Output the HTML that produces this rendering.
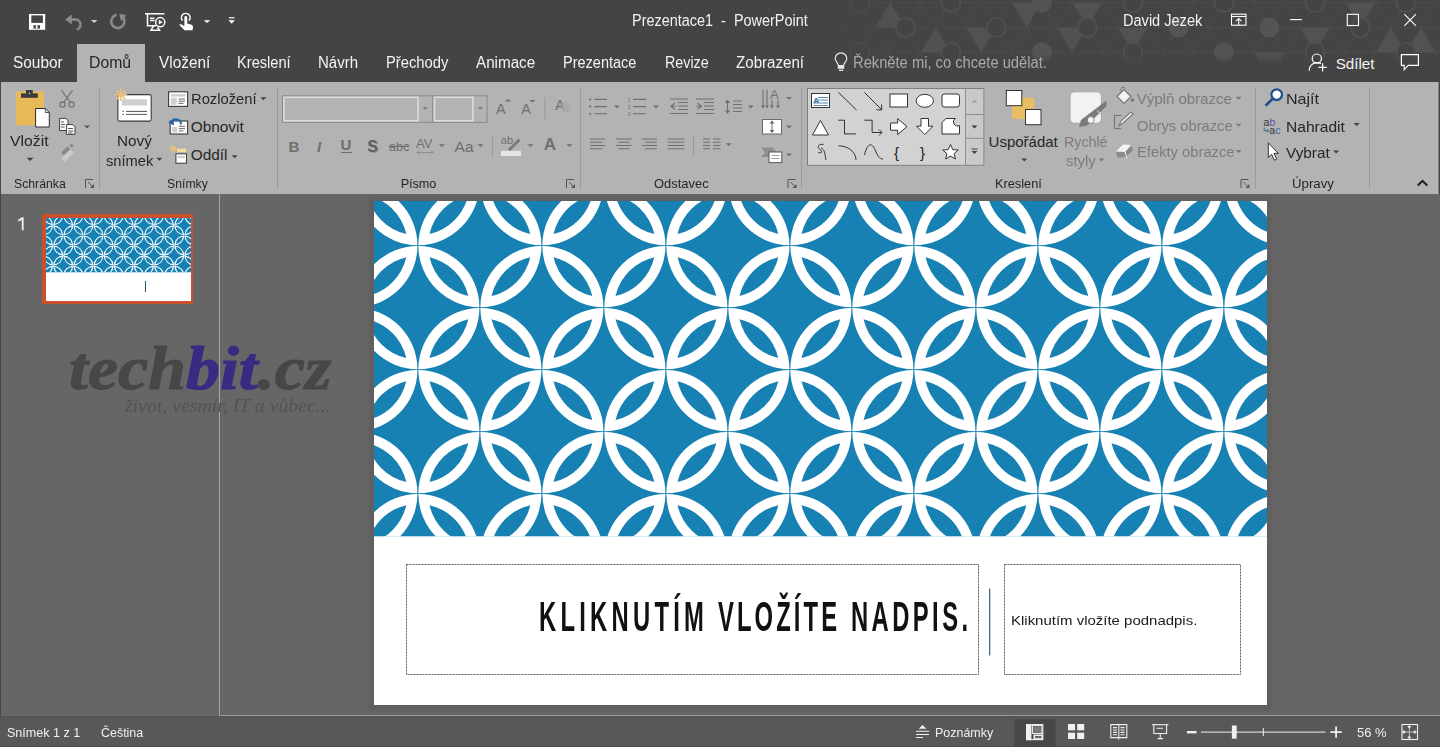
<!DOCTYPE html>
<html><head><meta charset="utf-8">
<style>
*{margin:0;padding:0;box-sizing:border-box}
html,body{width:1440px;height:747px;overflow:hidden;background:#666666;font-family:"Liberation Sans",sans-serif}
.a{position:absolute}
.t{position:absolute;line-height:normal;white-space:nowrap}
svg{overflow:visible}
</style></head><body>
<div class="a" style="left:0;top:0;width:1440px;height:82px;background:#444444"></div>
<svg width="1440" height="82" style="position:absolute;left:0;top:0"><defs><linearGradient id="hgx" x1="0" y1="0" x2="1" y2="0" gradientUnits="objectBoundingBox"><stop offset="0" stop-color="#fff" stop-opacity="0"/><stop offset="0.12" stop-color="#fff" stop-opacity="1"/><stop offset="1" stop-color="#fff" stop-opacity="1"/></linearGradient><linearGradient id="hgy" x1="0" y1="0" x2="0" y2="1"><stop offset="0" stop-color="#fff"/><stop offset="0.66" stop-color="#fff"/><stop offset="0.8" stop-color="#000"/></linearGradient><mask id="hm" maskUnits="userSpaceOnUse" x="820" y="0" width="620" height="82"><rect x="820" y="0" width="620" height="82" fill="url(#hgx)"/></mask><mask id="hm2" maskUnits="userSpaceOnUse" x="0" y="0" width="1440" height="82"><rect x="0" y="0" width="1440" height="82" fill="url(#hgy)"/></mask></defs><g mask="url(#hm2)"><g mask="url(#hm)"><path d="M905.4 27.5L875.1 27.5L890.2 2.5ZM950.9 52.5L920.6 52.5L935.7 27.5ZM996.4 27.5L981.2 52.5L966.1 27.5ZM1041.9 2.5L1026.7 27.5L1011.6 2.5ZM1087.4 27.5L1072.2 52.5L1057.1 27.5ZM1087.4 27.5L1072.2 2.5L1102.6 2.5ZM1132.9 52.5L1117.7 27.5L1148.1 27.5ZM1269.4 77.5L1254.2 52.5L1284.6 52.5ZM1314.9 52.5L1299.7 27.5L1330.1 27.5ZM1360.4 27.5L1345.2 2.5L1375.6 2.5ZM1405.9 52.5L1375.6 52.5L1390.7 27.5ZM1405.9 52.5L1421.1 27.5L1436.2 52.5Z" fill="#525252"/><path d="M799.2 2.5 L784.1 27.5 L753.7 27.5 L738.6 2.5 L753.7 -22.5 L784.1 -22.5ZM768.9 2.5L799.2 2.5M768.9 2.5L784.1 27.5M768.9 2.5L753.7 27.5M768.9 2.5L738.6 2.5M768.9 2.5L753.7 -22.5M768.9 2.5L784.1 -22.5M799.2 52.5 L784.1 77.5 L753.7 77.5 L738.6 52.5 L753.7 27.5 L784.1 27.5ZM768.9 52.5L799.2 52.5M768.9 52.5L784.1 77.5M768.9 52.5L753.7 77.5M768.9 52.5L738.6 52.5M768.9 52.5L753.7 27.5M768.9 52.5L784.1 27.5M844.7 -22.5 L829.6 2.5 L799.2 2.5 L784.1 -22.5 L799.2 -47.5 L829.6 -47.5ZM814.4 -22.5L844.7 -22.5M814.4 -22.5L829.6 2.5M814.4 -22.5L799.2 2.5M814.4 -22.5L784.1 -22.5M814.4 -22.5L799.2 -47.5M814.4 -22.5L829.6 -47.5M844.7 27.5 L829.6 52.5 L799.2 52.5 L784.1 27.5 L799.2 2.5 L829.6 2.5ZM814.4 27.5L844.7 27.5M814.4 27.5L829.6 52.5M814.4 27.5L799.2 52.5M814.4 27.5L784.1 27.5M814.4 27.5L799.2 2.5M814.4 27.5L829.6 2.5M844.7 77.5 L829.6 102.5 L799.2 102.5 L784.1 77.5 L799.2 52.5 L829.6 52.5ZM814.4 77.5L844.7 77.5M814.4 77.5L829.6 102.5M814.4 77.5L799.2 102.5M814.4 77.5L784.1 77.5M814.4 77.5L799.2 52.5M814.4 77.5L829.6 52.5M890.2 2.5 L875.1 27.5 L844.7 27.5 L829.6 2.5 L844.7 -22.5 L875.1 -22.5ZM859.9 2.5L890.2 2.5M859.9 2.5L875.1 27.5M859.9 2.5L844.7 27.5M859.9 2.5L829.6 2.5M859.9 2.5L844.7 -22.5M859.9 2.5L875.1 -22.5M890.2 52.5 L875.1 77.5 L844.7 77.5 L829.6 52.5 L844.7 27.5 L875.1 27.5ZM859.9 52.5L890.2 52.5M859.9 52.5L875.1 77.5M859.9 52.5L844.7 77.5M859.9 52.5L829.6 52.5M859.9 52.5L844.7 27.5M859.9 52.5L875.1 27.5M935.7 -22.5 L920.6 2.5 L890.2 2.5 L875.1 -22.5 L890.2 -47.5 L920.6 -47.5ZM905.4 -22.5L935.7 -22.5M905.4 -22.5L920.6 2.5M905.4 -22.5L890.2 2.5M905.4 -22.5L875.1 -22.5M905.4 -22.5L890.2 -47.5M905.4 -22.5L920.6 -47.5M935.7 27.5 L920.6 52.5 L890.2 52.5 L875.1 27.5 L890.2 2.5 L920.6 2.5ZM905.4 27.5L935.7 27.5M905.4 27.5L920.6 52.5M905.4 27.5L890.2 52.5M905.4 27.5L875.1 27.5M905.4 27.5L890.2 2.5M905.4 27.5L920.6 2.5M935.7 77.5 L920.6 102.5 L890.2 102.5 L875.1 77.5 L890.2 52.5 L920.6 52.5ZM905.4 77.5L935.7 77.5M905.4 77.5L920.6 102.5M905.4 77.5L890.2 102.5M905.4 77.5L875.1 77.5M905.4 77.5L890.2 52.5M905.4 77.5L920.6 52.5M981.2 2.5 L966.1 27.5 L935.7 27.5 L920.6 2.5 L935.7 -22.5 L966.1 -22.5ZM950.9 2.5L981.2 2.5M950.9 2.5L966.1 27.5M950.9 2.5L935.7 27.5M950.9 2.5L920.6 2.5M950.9 2.5L935.7 -22.5M950.9 2.5L966.1 -22.5M981.2 52.5 L966.1 77.5 L935.7 77.5 L920.6 52.5 L935.7 27.5 L966.1 27.5ZM950.9 52.5L981.2 52.5M950.9 52.5L966.1 77.5M950.9 52.5L935.7 77.5M950.9 52.5L920.6 52.5M950.9 52.5L935.7 27.5M950.9 52.5L966.1 27.5M1026.7 -22.5 L1011.6 2.5 L981.2 2.5 L966.1 -22.5 L981.2 -47.5 L1011.6 -47.5ZM996.4 -22.5L1026.7 -22.5M996.4 -22.5L1011.6 2.5M996.4 -22.5L981.2 2.5M996.4 -22.5L966.1 -22.5M996.4 -22.5L981.2 -47.5M996.4 -22.5L1011.6 -47.5M1026.7 27.5 L1011.6 52.5 L981.2 52.5 L966.1 27.5 L981.2 2.5 L1011.6 2.5ZM996.4 27.5L1026.7 27.5M996.4 27.5L1011.6 52.5M996.4 27.5L981.2 52.5M996.4 27.5L966.1 27.5M996.4 27.5L981.2 2.5M996.4 27.5L1011.6 2.5M1026.7 77.5 L1011.6 102.5 L981.2 102.5 L966.1 77.5 L981.2 52.5 L1011.6 52.5ZM996.4 77.5L1026.7 77.5M996.4 77.5L1011.6 102.5M996.4 77.5L981.2 102.5M996.4 77.5L966.1 77.5M996.4 77.5L981.2 52.5M996.4 77.5L1011.6 52.5M1072.2 2.5 L1057.1 27.5 L1026.7 27.5 L1011.6 2.5 L1026.7 -22.5 L1057.1 -22.5ZM1041.9 2.5L1072.2 2.5M1041.9 2.5L1057.1 27.5M1041.9 2.5L1026.7 27.5M1041.9 2.5L1011.6 2.5M1041.9 2.5L1026.7 -22.5M1041.9 2.5L1057.1 -22.5M1072.2 52.5 L1057.1 77.5 L1026.7 77.5 L1011.6 52.5 L1026.7 27.5 L1057.1 27.5ZM1041.9 52.5L1072.2 52.5M1041.9 52.5L1057.1 77.5M1041.9 52.5L1026.7 77.5M1041.9 52.5L1011.6 52.5M1041.9 52.5L1026.7 27.5M1041.9 52.5L1057.1 27.5M1117.7 -22.5 L1102.6 2.5 L1072.2 2.5 L1057.1 -22.5 L1072.2 -47.5 L1102.6 -47.5ZM1087.4 -22.5L1117.7 -22.5M1087.4 -22.5L1102.6 2.5M1087.4 -22.5L1072.2 2.5M1087.4 -22.5L1057.1 -22.5M1087.4 -22.5L1072.2 -47.5M1087.4 -22.5L1102.6 -47.5M1117.7 27.5 L1102.6 52.5 L1072.2 52.5 L1057.1 27.5 L1072.2 2.5 L1102.6 2.5ZM1087.4 27.5L1117.7 27.5M1087.4 27.5L1102.6 52.5M1087.4 27.5L1072.2 52.5M1087.4 27.5L1057.1 27.5M1087.4 27.5L1072.2 2.5M1087.4 27.5L1102.6 2.5M1117.7 77.5 L1102.6 102.5 L1072.2 102.5 L1057.1 77.5 L1072.2 52.5 L1102.6 52.5ZM1087.4 77.5L1117.7 77.5M1087.4 77.5L1102.6 102.5M1087.4 77.5L1072.2 102.5M1087.4 77.5L1057.1 77.5M1087.4 77.5L1072.2 52.5M1087.4 77.5L1102.6 52.5M1163.2 2.5 L1148.1 27.5 L1117.7 27.5 L1102.6 2.5 L1117.7 -22.5 L1148.1 -22.5ZM1132.9 2.5L1163.2 2.5M1132.9 2.5L1148.1 27.5M1132.9 2.5L1117.7 27.5M1132.9 2.5L1102.6 2.5M1132.9 2.5L1117.7 -22.5M1132.9 2.5L1148.1 -22.5M1163.2 52.5 L1148.1 77.5 L1117.7 77.5 L1102.6 52.5 L1117.7 27.5 L1148.1 27.5ZM1132.9 52.5L1163.2 52.5M1132.9 52.5L1148.1 77.5M1132.9 52.5L1117.7 77.5M1132.9 52.5L1102.6 52.5M1132.9 52.5L1117.7 27.5M1132.9 52.5L1148.1 27.5M1208.7 -22.5 L1193.6 2.5 L1163.2 2.5 L1148.1 -22.5 L1163.2 -47.5 L1193.6 -47.5ZM1178.4 -22.5L1208.7 -22.5M1178.4 -22.5L1193.6 2.5M1178.4 -22.5L1163.2 2.5M1178.4 -22.5L1148.1 -22.5M1178.4 -22.5L1163.2 -47.5M1178.4 -22.5L1193.6 -47.5M1208.7 27.5 L1193.6 52.5 L1163.2 52.5 L1148.1 27.5 L1163.2 2.5 L1193.6 2.5ZM1178.4 27.5L1208.7 27.5M1178.4 27.5L1193.6 52.5M1178.4 27.5L1163.2 52.5M1178.4 27.5L1148.1 27.5M1178.4 27.5L1163.2 2.5M1178.4 27.5L1193.6 2.5M1208.7 77.5 L1193.6 102.5 L1163.2 102.5 L1148.1 77.5 L1163.2 52.5 L1193.6 52.5ZM1178.4 77.5L1208.7 77.5M1178.4 77.5L1193.6 102.5M1178.4 77.5L1163.2 102.5M1178.4 77.5L1148.1 77.5M1178.4 77.5L1163.2 52.5M1178.4 77.5L1193.6 52.5M1254.2 2.5 L1239.1 27.5 L1208.7 27.5 L1193.6 2.5 L1208.7 -22.5 L1239.1 -22.5ZM1223.9 2.5L1254.2 2.5M1223.9 2.5L1239.1 27.5M1223.9 2.5L1208.7 27.5M1223.9 2.5L1193.6 2.5M1223.9 2.5L1208.7 -22.5M1223.9 2.5L1239.1 -22.5M1254.2 52.5 L1239.1 77.5 L1208.7 77.5 L1193.6 52.5 L1208.7 27.5 L1239.1 27.5ZM1223.9 52.5L1254.2 52.5M1223.9 52.5L1239.1 77.5M1223.9 52.5L1208.7 77.5M1223.9 52.5L1193.6 52.5M1223.9 52.5L1208.7 27.5M1223.9 52.5L1239.1 27.5M1299.7 -22.5 L1284.6 2.5 L1254.2 2.5 L1239.1 -22.5 L1254.2 -47.5 L1284.6 -47.5ZM1269.4 -22.5L1299.7 -22.5M1269.4 -22.5L1284.6 2.5M1269.4 -22.5L1254.2 2.5M1269.4 -22.5L1239.1 -22.5M1269.4 -22.5L1254.2 -47.5M1269.4 -22.5L1284.6 -47.5M1299.7 27.5 L1284.6 52.5 L1254.2 52.5 L1239.1 27.5 L1254.2 2.5 L1284.6 2.5ZM1269.4 27.5L1299.7 27.5M1269.4 27.5L1284.6 52.5M1269.4 27.5L1254.2 52.5M1269.4 27.5L1239.1 27.5M1269.4 27.5L1254.2 2.5M1269.4 27.5L1284.6 2.5M1299.7 77.5 L1284.6 102.5 L1254.2 102.5 L1239.1 77.5 L1254.2 52.5 L1284.6 52.5ZM1269.4 77.5L1299.7 77.5M1269.4 77.5L1284.6 102.5M1269.4 77.5L1254.2 102.5M1269.4 77.5L1239.1 77.5M1269.4 77.5L1254.2 52.5M1269.4 77.5L1284.6 52.5M1345.2 2.5 L1330.1 27.5 L1299.7 27.5 L1284.6 2.5 L1299.7 -22.5 L1330.1 -22.5ZM1314.9 2.5L1345.2 2.5M1314.9 2.5L1330.1 27.5M1314.9 2.5L1299.7 27.5M1314.9 2.5L1284.6 2.5M1314.9 2.5L1299.7 -22.5M1314.9 2.5L1330.1 -22.5M1345.2 52.5 L1330.1 77.5 L1299.7 77.5 L1284.6 52.5 L1299.7 27.5 L1330.1 27.5ZM1314.9 52.5L1345.2 52.5M1314.9 52.5L1330.1 77.5M1314.9 52.5L1299.7 77.5M1314.9 52.5L1284.6 52.5M1314.9 52.5L1299.7 27.5M1314.9 52.5L1330.1 27.5M1390.7 -22.5 L1375.6 2.5 L1345.2 2.5 L1330.1 -22.5 L1345.2 -47.5 L1375.6 -47.5ZM1360.4 -22.5L1390.7 -22.5M1360.4 -22.5L1375.6 2.5M1360.4 -22.5L1345.2 2.5M1360.4 -22.5L1330.1 -22.5M1360.4 -22.5L1345.2 -47.5M1360.4 -22.5L1375.6 -47.5M1390.7 27.5 L1375.6 52.5 L1345.2 52.5 L1330.1 27.5 L1345.2 2.5 L1375.6 2.5ZM1360.4 27.5L1390.7 27.5M1360.4 27.5L1375.6 52.5M1360.4 27.5L1345.2 52.5M1360.4 27.5L1330.1 27.5M1360.4 27.5L1345.2 2.5M1360.4 27.5L1375.6 2.5M1390.7 77.5 L1375.6 102.5 L1345.2 102.5 L1330.1 77.5 L1345.2 52.5 L1375.6 52.5ZM1360.4 77.5L1390.7 77.5M1360.4 77.5L1375.6 102.5M1360.4 77.5L1345.2 102.5M1360.4 77.5L1330.1 77.5M1360.4 77.5L1345.2 52.5M1360.4 77.5L1375.6 52.5M1436.2 2.5 L1421.1 27.5 L1390.7 27.5 L1375.6 2.5 L1390.7 -22.5 L1421.1 -22.5ZM1405.9 2.5L1436.2 2.5M1405.9 2.5L1421.1 27.5M1405.9 2.5L1390.7 27.5M1405.9 2.5L1375.6 2.5M1405.9 2.5L1390.7 -22.5M1405.9 2.5L1421.1 -22.5M1436.2 52.5 L1421.1 77.5 L1390.7 77.5 L1375.6 52.5 L1390.7 27.5 L1421.1 27.5ZM1405.9 52.5L1436.2 52.5M1405.9 52.5L1421.1 77.5M1405.9 52.5L1390.7 77.5M1405.9 52.5L1375.6 52.5M1405.9 52.5L1390.7 27.5M1405.9 52.5L1421.1 27.5M1481.7 -22.5 L1466.6 2.5 L1436.2 2.5 L1421.1 -22.5 L1436.2 -47.5 L1466.6 -47.5ZM1451.4 -22.5L1481.7 -22.5M1451.4 -22.5L1466.6 2.5M1451.4 -22.5L1436.2 2.5M1451.4 -22.5L1421.1 -22.5M1451.4 -22.5L1436.2 -47.5M1451.4 -22.5L1466.6 -47.5M1481.7 27.5 L1466.6 52.5 L1436.2 52.5 L1421.1 27.5 L1436.2 2.5 L1466.6 2.5ZM1451.4 27.5L1481.7 27.5M1451.4 27.5L1466.6 52.5M1451.4 27.5L1436.2 52.5M1451.4 27.5L1421.1 27.5M1451.4 27.5L1436.2 2.5M1451.4 27.5L1466.6 2.5M1481.7 77.5 L1466.6 102.5 L1436.2 102.5 L1421.1 77.5 L1436.2 52.5 L1466.6 52.5ZM1451.4 77.5L1481.7 77.5M1451.4 77.5L1466.6 102.5M1451.4 77.5L1436.2 102.5M1451.4 77.5L1421.1 77.5M1451.4 77.5L1436.2 52.5M1451.4 77.5L1466.6 52.5M1527.2 2.5 L1512.1 27.5 L1481.7 27.5 L1466.6 2.5 L1481.7 -22.5 L1512.1 -22.5ZM1496.9 2.5L1527.2 2.5M1496.9 2.5L1512.1 27.5M1496.9 2.5L1481.7 27.5M1496.9 2.5L1466.6 2.5M1496.9 2.5L1481.7 -22.5M1496.9 2.5L1512.1 -22.5M1527.2 52.5 L1512.1 77.5 L1481.7 77.5 L1466.6 52.5 L1481.7 27.5 L1512.1 27.5ZM1496.9 52.5L1527.2 52.5M1496.9 52.5L1512.1 77.5M1496.9 52.5L1481.7 77.5M1496.9 52.5L1466.6 52.5M1496.9 52.5L1481.7 27.5M1496.9 52.5L1512.1 27.5" fill="none" stroke="#4b4b4b" stroke-width="1.1"/><circle cx="768.9" cy="2.5" r="9.5" fill="#444" stroke="#4f4f4f" stroke-width="2"/><circle cx="768.9" cy="52.5" r="9.5" fill="#444" stroke="#4f4f4f" stroke-width="2"/><circle cx="814.4" cy="-22.5" r="9.5" fill="#444" stroke="#4f4f4f" stroke-width="2"/><circle cx="814.4" cy="27.5" r="9.5" fill="#444" stroke="#4f4f4f" stroke-width="2"/><circle cx="814.4" cy="77.5" r="9.5" fill="#444" stroke="#4f4f4f" stroke-width="2"/><circle cx="859.9" cy="2.5" r="9.5" fill="#444" stroke="#4f4f4f" stroke-width="2"/><circle cx="859.9" cy="52.5" r="9.5" fill="#444" stroke="#4f4f4f" stroke-width="2"/><circle cx="905.4" cy="-22.5" r="9.5" fill="#444" stroke="#4f4f4f" stroke-width="2"/><circle cx="905.4" cy="27.5" r="9.5" fill="#444" stroke="#4f4f4f" stroke-width="2"/><circle cx="905.4" cy="77.5" r="9.5" fill="#444" stroke="#4f4f4f" stroke-width="2"/><circle cx="950.9" cy="2.5" r="9.5" fill="#444" stroke="#4f4f4f" stroke-width="2"/><circle cx="950.9" cy="52.5" r="9.5" fill="#444" stroke="#4f4f4f" stroke-width="2"/><circle cx="996.4" cy="-22.5" r="9.5" fill="#444" stroke="#4f4f4f" stroke-width="2"/><circle cx="996.4" cy="27.5" r="9.5" fill="#444" stroke="#4f4f4f" stroke-width="2"/><circle cx="996.4" cy="77.5" r="9.5" fill="#444" stroke="#4f4f4f" stroke-width="2"/><circle cx="1041.9" cy="2.5" r="10" fill="#545454"/><circle cx="1041.9" cy="52.5" r="10" fill="#545454"/><circle cx="1087.4" cy="-22.5" r="9.5" fill="#444" stroke="#4f4f4f" stroke-width="2"/><circle cx="1087.4" cy="27.5" r="9.5" fill="#444" stroke="#4f4f4f" stroke-width="2"/><circle cx="1087.4" cy="77.5" r="9.5" fill="#444" stroke="#4f4f4f" stroke-width="2"/><circle cx="1132.9" cy="2.5" r="9.5" fill="#444" stroke="#4f4f4f" stroke-width="2"/><circle cx="1132.9" cy="52.5" r="9.5" fill="#444" stroke="#4f4f4f" stroke-width="2"/><circle cx="1178.4" cy="-22.5" r="9.5" fill="#444" stroke="#4f4f4f" stroke-width="2"/><circle cx="1178.4" cy="27.5" r="10" fill="#545454"/><circle cx="1178.4" cy="77.5" r="9.5" fill="#444" stroke="#4f4f4f" stroke-width="2"/><circle cx="1223.9" cy="2.5" r="9.5" fill="#444" stroke="#4f4f4f" stroke-width="2"/><circle cx="1223.9" cy="52.5" r="10" fill="#545454"/><circle cx="1269.4" cy="-22.5" r="9.5" fill="#444" stroke="#4f4f4f" stroke-width="2"/><circle cx="1269.4" cy="27.5" r="10" fill="#545454"/><circle cx="1269.4" cy="77.5" r="9.5" fill="#444" stroke="#4f4f4f" stroke-width="2"/><circle cx="1314.9" cy="2.5" r="9.5" fill="#444" stroke="#4f4f4f" stroke-width="2"/><circle cx="1314.9" cy="52.5" r="9.5" fill="#444" stroke="#4f4f4f" stroke-width="2"/><circle cx="1360.4" cy="-22.5" r="9.5" fill="#444" stroke="#4f4f4f" stroke-width="2"/><circle cx="1360.4" cy="27.5" r="9.5" fill="#444" stroke="#4f4f4f" stroke-width="2"/><circle cx="1360.4" cy="77.5" r="9.5" fill="#444" stroke="#4f4f4f" stroke-width="2"/><circle cx="1405.9" cy="2.5" r="9.5" fill="#444" stroke="#4f4f4f" stroke-width="2"/><circle cx="1405.9" cy="52.5" r="9.5" fill="#444" stroke="#4f4f4f" stroke-width="2"/><circle cx="1451.4" cy="-22.5" r="9.5" fill="#444" stroke="#4f4f4f" stroke-width="2"/><circle cx="1451.4" cy="27.5" r="9.5" fill="#444" stroke="#4f4f4f" stroke-width="2"/><circle cx="1451.4" cy="77.5" r="9.5" fill="#444" stroke="#4f4f4f" stroke-width="2"/><circle cx="1496.9" cy="2.5" r="9.5" fill="#444" stroke="#4f4f4f" stroke-width="2"/><circle cx="1496.9" cy="52.5" r="9.5" fill="#444" stroke="#4f4f4f" stroke-width="2"/></g></g></svg>
<div class="a" style="left:0;top:82px;width:1440px;height:112px;background:#b3b3b3;border-left:1px solid #3c3c3c"></div>
<div class="a" style="left:77px;top:44px;width:68px;height:38px;background:#b3b3b3"></div>
<div class="a" style="left:0;top:194px;width:1440px;height:525px;background:#666666"></div>
<div class="a" style="left:0;top:716px;width:1440px;height:31px;background:#585858;border-top:2px solid #545454;border-bottom:1px solid #4a4a4a"></div>
<div class="a" style="left:219px;top:194px;width:1px;height:522px;background:#a3a3a3"></div>
<div class="a" style="left:0;top:82px;width:1px;height:634px;background:#474747"></div>
<svg width="30" height="20" style="position:absolute;left:10px;top:214px"><path d="M11.8 3.3H13.6V16.2H11.8V5.9L8.3 7.6V5.8Z" fill="#f2f2f2"/></svg>
<div class="a" style="left:219px;top:715px;width:1221px;height:1px;background:#9a9a9a"></div>
<!-- slide -->
<div class="a" style="left:369px;top:198px;width:902px;height:513px;background:#5f5f5f;filter:blur(1.5px)"></div>
<div class="a" style="left:374px;top:201px;width:893px;height:504px;overflow:hidden"><svg width="893" height="504" viewBox="0 0 893 504" style="position:absolute;left:0;top:0"><defs><clipPath id="pc893"><rect x="0" y="0" width="893" height="335.6"/></clipPath></defs><rect width="893" height="504" fill="#fff"/><g clip-path="url(#pc893)"><rect width="893" height="335.6" fill="#1681b2"/><path fill="#fff" fill-rule="evenodd" d="M-79.65 44.15A61.55 61.55 0 0 1 -18.55 -16.95A61.55 61.55 0 0 1 -79.65 44.15ZM-68.48 32.98A51.70 51.70 0 0 1 -29.72 -5.78A51.70 51.70 0 0 1 -68.48 32.98ZM-18.55 -17.85A61.55 61.55 0 0 1 -79.65 -78.95A61.55 61.55 0 0 1 -18.55 -17.85ZM-29.72 -29.02A51.70 51.70 0 0 1 -68.48 -67.78A51.70 51.70 0 0 1 -29.72 -29.02ZM-79.65 168.15A61.55 61.55 0 0 1 -18.55 107.05A61.55 61.55 0 0 1 -79.65 168.15ZM-68.48 156.98A51.70 51.70 0 0 1 -29.72 118.22A51.70 51.70 0 0 1 -68.48 156.98ZM-18.55 106.15A61.55 61.55 0 0 1 -79.65 45.05A61.55 61.55 0 0 1 -18.55 106.15ZM-29.72 94.98A51.70 51.70 0 0 1 -68.48 56.22A51.70 51.70 0 0 1 -29.72 94.98ZM-79.65 292.15A61.55 61.55 0 0 1 -18.55 231.05A61.55 61.55 0 0 1 -79.65 292.15ZM-68.48 280.98A51.70 51.70 0 0 1 -29.72 242.22A51.70 51.70 0 0 1 -68.48 280.98ZM-18.55 230.15A61.55 61.55 0 0 1 -79.65 169.05A61.55 61.55 0 0 1 -18.55 230.15ZM-29.72 218.98A51.70 51.70 0 0 1 -68.48 180.22A51.70 51.70 0 0 1 -29.72 218.98ZM-79.65 416.15A61.55 61.55 0 0 1 -18.55 355.05A61.55 61.55 0 0 1 -79.65 416.15ZM-68.48 404.98A51.70 51.70 0 0 1 -29.72 366.22A51.70 51.70 0 0 1 -68.48 404.98ZM-18.55 354.15A61.55 61.55 0 0 1 -79.65 293.05A61.55 61.55 0 0 1 -18.55 354.15ZM-29.72 342.98A51.70 51.70 0 0 1 -68.48 304.22A51.70 51.70 0 0 1 -29.72 342.98ZM-17.65 -17.85A61.55 61.55 0 0 1 43.45 -78.95A61.55 61.55 0 0 1 -17.65 -17.85ZM-6.48 -29.02A51.70 51.70 0 0 1 32.28 -67.78A51.70 51.70 0 0 1 -6.48 -29.02ZM-17.65 106.15A61.55 61.55 0 0 1 43.45 45.05A61.55 61.55 0 0 1 -17.65 106.15ZM-6.48 94.98A51.70 51.70 0 0 1 32.28 56.22A51.70 51.70 0 0 1 -6.48 94.98ZM43.45 44.15A61.55 61.55 0 0 1 -17.65 -16.95A61.55 61.55 0 0 1 43.45 44.15ZM32.28 32.98A51.70 51.70 0 0 1 -6.48 -5.78A51.70 51.70 0 0 1 32.28 32.98ZM-17.65 230.15A61.55 61.55 0 0 1 43.45 169.05A61.55 61.55 0 0 1 -17.65 230.15ZM-6.48 218.98A51.70 51.70 0 0 1 32.28 180.22A51.70 51.70 0 0 1 -6.48 218.98ZM43.45 168.15A61.55 61.55 0 0 1 -17.65 107.05A61.55 61.55 0 0 1 43.45 168.15ZM32.28 156.98A51.70 51.70 0 0 1 -6.48 118.22A51.70 51.70 0 0 1 32.28 156.98ZM-17.65 354.15A61.55 61.55 0 0 1 43.45 293.05A61.55 61.55 0 0 1 -17.65 354.15ZM-6.48 342.98A51.70 51.70 0 0 1 32.28 304.22A51.70 51.70 0 0 1 -6.48 342.98ZM43.45 292.15A61.55 61.55 0 0 1 -17.65 231.05A61.55 61.55 0 0 1 43.45 292.15ZM32.28 280.98A51.70 51.70 0 0 1 -6.48 242.22A51.70 51.70 0 0 1 32.28 280.98ZM43.45 416.15A61.55 61.55 0 0 1 -17.65 355.05A61.55 61.55 0 0 1 43.45 416.15ZM32.28 404.98A51.70 51.70 0 0 1 -6.48 366.22A51.70 51.70 0 0 1 32.28 404.98ZM44.35 44.15A61.55 61.55 0 0 1 105.45 -16.95A61.55 61.55 0 0 1 44.35 44.15ZM55.52 32.98A51.70 51.70 0 0 1 94.28 -5.78A51.70 51.70 0 0 1 55.52 32.98ZM105.45 -17.85A61.55 61.55 0 0 1 44.35 -78.95A61.55 61.55 0 0 1 105.45 -17.85ZM94.28 -29.02A51.70 51.70 0 0 1 55.52 -67.78A51.70 51.70 0 0 1 94.28 -29.02ZM44.35 168.15A61.55 61.55 0 0 1 105.45 107.05A61.55 61.55 0 0 1 44.35 168.15ZM55.52 156.98A51.70 51.70 0 0 1 94.28 118.22A51.70 51.70 0 0 1 55.52 156.98ZM105.45 106.15A61.55 61.55 0 0 1 44.35 45.05A61.55 61.55 0 0 1 105.45 106.15ZM94.28 94.98A51.70 51.70 0 0 1 55.52 56.22A51.70 51.70 0 0 1 94.28 94.98ZM44.35 292.15A61.55 61.55 0 0 1 105.45 231.05A61.55 61.55 0 0 1 44.35 292.15ZM55.52 280.98A51.70 51.70 0 0 1 94.28 242.22A51.70 51.70 0 0 1 55.52 280.98ZM105.45 230.15A61.55 61.55 0 0 1 44.35 169.05A61.55 61.55 0 0 1 105.45 230.15ZM94.28 218.98A51.70 51.70 0 0 1 55.52 180.22A51.70 51.70 0 0 1 94.28 218.98ZM44.35 416.15A61.55 61.55 0 0 1 105.45 355.05A61.55 61.55 0 0 1 44.35 416.15ZM55.52 404.98A51.70 51.70 0 0 1 94.28 366.22A51.70 51.70 0 0 1 55.52 404.98ZM105.45 354.15A61.55 61.55 0 0 1 44.35 293.05A61.55 61.55 0 0 1 105.45 354.15ZM94.28 342.98A51.70 51.70 0 0 1 55.52 304.22A51.70 51.70 0 0 1 94.28 342.98ZM106.35 -17.85A61.55 61.55 0 0 1 167.45 -78.95A61.55 61.55 0 0 1 106.35 -17.85ZM117.52 -29.02A51.70 51.70 0 0 1 156.28 -67.78A51.70 51.70 0 0 1 117.52 -29.02ZM106.35 106.15A61.55 61.55 0 0 1 167.45 45.05A61.55 61.55 0 0 1 106.35 106.15ZM117.52 94.98A51.70 51.70 0 0 1 156.28 56.22A51.70 51.70 0 0 1 117.52 94.98ZM167.45 44.15A61.55 61.55 0 0 1 106.35 -16.95A61.55 61.55 0 0 1 167.45 44.15ZM156.28 32.98A51.70 51.70 0 0 1 117.52 -5.78A51.70 51.70 0 0 1 156.28 32.98ZM106.35 230.15A61.55 61.55 0 0 1 167.45 169.05A61.55 61.55 0 0 1 106.35 230.15ZM117.52 218.98A51.70 51.70 0 0 1 156.28 180.22A51.70 51.70 0 0 1 117.52 218.98ZM167.45 168.15A61.55 61.55 0 0 1 106.35 107.05A61.55 61.55 0 0 1 167.45 168.15ZM156.28 156.98A51.70 51.70 0 0 1 117.52 118.22A51.70 51.70 0 0 1 156.28 156.98ZM106.35 354.15A61.55 61.55 0 0 1 167.45 293.05A61.55 61.55 0 0 1 106.35 354.15ZM117.52 342.98A51.70 51.70 0 0 1 156.28 304.22A51.70 51.70 0 0 1 117.52 342.98ZM167.45 292.15A61.55 61.55 0 0 1 106.35 231.05A61.55 61.55 0 0 1 167.45 292.15ZM156.28 280.98A51.70 51.70 0 0 1 117.52 242.22A51.70 51.70 0 0 1 156.28 280.98ZM167.45 416.15A61.55 61.55 0 0 1 106.35 355.05A61.55 61.55 0 0 1 167.45 416.15ZM156.28 404.98A51.70 51.70 0 0 1 117.52 366.22A51.70 51.70 0 0 1 156.28 404.98ZM168.35 44.15A61.55 61.55 0 0 1 229.45 -16.95A61.55 61.55 0 0 1 168.35 44.15ZM179.52 32.98A51.70 51.70 0 0 1 218.28 -5.78A51.70 51.70 0 0 1 179.52 32.98ZM229.45 -17.85A61.55 61.55 0 0 1 168.35 -78.95A61.55 61.55 0 0 1 229.45 -17.85ZM218.28 -29.02A51.70 51.70 0 0 1 179.52 -67.78A51.70 51.70 0 0 1 218.28 -29.02ZM168.35 168.15A61.55 61.55 0 0 1 229.45 107.05A61.55 61.55 0 0 1 168.35 168.15ZM179.52 156.98A51.70 51.70 0 0 1 218.28 118.22A51.70 51.70 0 0 1 179.52 156.98ZM229.45 106.15A61.55 61.55 0 0 1 168.35 45.05A61.55 61.55 0 0 1 229.45 106.15ZM218.28 94.98A51.70 51.70 0 0 1 179.52 56.22A51.70 51.70 0 0 1 218.28 94.98ZM168.35 292.15A61.55 61.55 0 0 1 229.45 231.05A61.55 61.55 0 0 1 168.35 292.15ZM179.52 280.98A51.70 51.70 0 0 1 218.28 242.22A51.70 51.70 0 0 1 179.52 280.98ZM229.45 230.15A61.55 61.55 0 0 1 168.35 169.05A61.55 61.55 0 0 1 229.45 230.15ZM218.28 218.98A51.70 51.70 0 0 1 179.52 180.22A51.70 51.70 0 0 1 218.28 218.98ZM168.35 416.15A61.55 61.55 0 0 1 229.45 355.05A61.55 61.55 0 0 1 168.35 416.15ZM179.52 404.98A51.70 51.70 0 0 1 218.28 366.22A51.70 51.70 0 0 1 179.52 404.98ZM229.45 354.15A61.55 61.55 0 0 1 168.35 293.05A61.55 61.55 0 0 1 229.45 354.15ZM218.28 342.98A51.70 51.70 0 0 1 179.52 304.22A51.70 51.70 0 0 1 218.28 342.98ZM230.35 -17.85A61.55 61.55 0 0 1 291.45 -78.95A61.55 61.55 0 0 1 230.35 -17.85ZM241.52 -29.02A51.70 51.70 0 0 1 280.28 -67.78A51.70 51.70 0 0 1 241.52 -29.02ZM230.35 106.15A61.55 61.55 0 0 1 291.45 45.05A61.55 61.55 0 0 1 230.35 106.15ZM241.52 94.98A51.70 51.70 0 0 1 280.28 56.22A51.70 51.70 0 0 1 241.52 94.98ZM291.45 44.15A61.55 61.55 0 0 1 230.35 -16.95A61.55 61.55 0 0 1 291.45 44.15ZM280.28 32.98A51.70 51.70 0 0 1 241.52 -5.78A51.70 51.70 0 0 1 280.28 32.98ZM230.35 230.15A61.55 61.55 0 0 1 291.45 169.05A61.55 61.55 0 0 1 230.35 230.15ZM241.52 218.98A51.70 51.70 0 0 1 280.28 180.22A51.70 51.70 0 0 1 241.52 218.98ZM291.45 168.15A61.55 61.55 0 0 1 230.35 107.05A61.55 61.55 0 0 1 291.45 168.15ZM280.28 156.98A51.70 51.70 0 0 1 241.52 118.22A51.70 51.70 0 0 1 280.28 156.98ZM230.35 354.15A61.55 61.55 0 0 1 291.45 293.05A61.55 61.55 0 0 1 230.35 354.15ZM241.52 342.98A51.70 51.70 0 0 1 280.28 304.22A51.70 51.70 0 0 1 241.52 342.98ZM291.45 292.15A61.55 61.55 0 0 1 230.35 231.05A61.55 61.55 0 0 1 291.45 292.15ZM280.28 280.98A51.70 51.70 0 0 1 241.52 242.22A51.70 51.70 0 0 1 280.28 280.98ZM291.45 416.15A61.55 61.55 0 0 1 230.35 355.05A61.55 61.55 0 0 1 291.45 416.15ZM280.28 404.98A51.70 51.70 0 0 1 241.52 366.22A51.70 51.70 0 0 1 280.28 404.98ZM292.35 44.15A61.55 61.55 0 0 1 353.45 -16.95A61.55 61.55 0 0 1 292.35 44.15ZM303.52 32.98A51.70 51.70 0 0 1 342.28 -5.78A51.70 51.70 0 0 1 303.52 32.98ZM353.45 -17.85A61.55 61.55 0 0 1 292.35 -78.95A61.55 61.55 0 0 1 353.45 -17.85ZM342.28 -29.02A51.70 51.70 0 0 1 303.52 -67.78A51.70 51.70 0 0 1 342.28 -29.02ZM292.35 168.15A61.55 61.55 0 0 1 353.45 107.05A61.55 61.55 0 0 1 292.35 168.15ZM303.52 156.98A51.70 51.70 0 0 1 342.28 118.22A51.70 51.70 0 0 1 303.52 156.98ZM353.45 106.15A61.55 61.55 0 0 1 292.35 45.05A61.55 61.55 0 0 1 353.45 106.15ZM342.28 94.98A51.70 51.70 0 0 1 303.52 56.22A51.70 51.70 0 0 1 342.28 94.98ZM292.35 292.15A61.55 61.55 0 0 1 353.45 231.05A61.55 61.55 0 0 1 292.35 292.15ZM303.52 280.98A51.70 51.70 0 0 1 342.28 242.22A51.70 51.70 0 0 1 303.52 280.98ZM353.45 230.15A61.55 61.55 0 0 1 292.35 169.05A61.55 61.55 0 0 1 353.45 230.15ZM342.28 218.98A51.70 51.70 0 0 1 303.52 180.22A51.70 51.70 0 0 1 342.28 218.98ZM292.35 416.15A61.55 61.55 0 0 1 353.45 355.05A61.55 61.55 0 0 1 292.35 416.15ZM303.52 404.98A51.70 51.70 0 0 1 342.28 366.22A51.70 51.70 0 0 1 303.52 404.98ZM353.45 354.15A61.55 61.55 0 0 1 292.35 293.05A61.55 61.55 0 0 1 353.45 354.15ZM342.28 342.98A51.70 51.70 0 0 1 303.52 304.22A51.70 51.70 0 0 1 342.28 342.98ZM354.35 -17.85A61.55 61.55 0 0 1 415.45 -78.95A61.55 61.55 0 0 1 354.35 -17.85ZM365.52 -29.02A51.70 51.70 0 0 1 404.28 -67.78A51.70 51.70 0 0 1 365.52 -29.02ZM354.35 106.15A61.55 61.55 0 0 1 415.45 45.05A61.55 61.55 0 0 1 354.35 106.15ZM365.52 94.98A51.70 51.70 0 0 1 404.28 56.22A51.70 51.70 0 0 1 365.52 94.98ZM415.45 44.15A61.55 61.55 0 0 1 354.35 -16.95A61.55 61.55 0 0 1 415.45 44.15ZM404.28 32.98A51.70 51.70 0 0 1 365.52 -5.78A51.70 51.70 0 0 1 404.28 32.98ZM354.35 230.15A61.55 61.55 0 0 1 415.45 169.05A61.55 61.55 0 0 1 354.35 230.15ZM365.52 218.98A51.70 51.70 0 0 1 404.28 180.22A51.70 51.70 0 0 1 365.52 218.98ZM415.45 168.15A61.55 61.55 0 0 1 354.35 107.05A61.55 61.55 0 0 1 415.45 168.15ZM404.28 156.98A51.70 51.70 0 0 1 365.52 118.22A51.70 51.70 0 0 1 404.28 156.98ZM354.35 354.15A61.55 61.55 0 0 1 415.45 293.05A61.55 61.55 0 0 1 354.35 354.15ZM365.52 342.98A51.70 51.70 0 0 1 404.28 304.22A51.70 51.70 0 0 1 365.52 342.98ZM415.45 292.15A61.55 61.55 0 0 1 354.35 231.05A61.55 61.55 0 0 1 415.45 292.15ZM404.28 280.98A51.70 51.70 0 0 1 365.52 242.22A51.70 51.70 0 0 1 404.28 280.98ZM415.45 416.15A61.55 61.55 0 0 1 354.35 355.05A61.55 61.55 0 0 1 415.45 416.15ZM404.28 404.98A51.70 51.70 0 0 1 365.52 366.22A51.70 51.70 0 0 1 404.28 404.98ZM416.35 44.15A61.55 61.55 0 0 1 477.45 -16.95A61.55 61.55 0 0 1 416.35 44.15ZM427.52 32.98A51.70 51.70 0 0 1 466.28 -5.78A51.70 51.70 0 0 1 427.52 32.98ZM477.45 -17.85A61.55 61.55 0 0 1 416.35 -78.95A61.55 61.55 0 0 1 477.45 -17.85ZM466.28 -29.02A51.70 51.70 0 0 1 427.52 -67.78A51.70 51.70 0 0 1 466.28 -29.02ZM416.35 168.15A61.55 61.55 0 0 1 477.45 107.05A61.55 61.55 0 0 1 416.35 168.15ZM427.52 156.98A51.70 51.70 0 0 1 466.28 118.22A51.70 51.70 0 0 1 427.52 156.98ZM477.45 106.15A61.55 61.55 0 0 1 416.35 45.05A61.55 61.55 0 0 1 477.45 106.15ZM466.28 94.98A51.70 51.70 0 0 1 427.52 56.22A51.70 51.70 0 0 1 466.28 94.98ZM416.35 292.15A61.55 61.55 0 0 1 477.45 231.05A61.55 61.55 0 0 1 416.35 292.15ZM427.52 280.98A51.70 51.70 0 0 1 466.28 242.22A51.70 51.70 0 0 1 427.52 280.98ZM477.45 230.15A61.55 61.55 0 0 1 416.35 169.05A61.55 61.55 0 0 1 477.45 230.15ZM466.28 218.98A51.70 51.70 0 0 1 427.52 180.22A51.70 51.70 0 0 1 466.28 218.98ZM416.35 416.15A61.55 61.55 0 0 1 477.45 355.05A61.55 61.55 0 0 1 416.35 416.15ZM427.52 404.98A51.70 51.70 0 0 1 466.28 366.22A51.70 51.70 0 0 1 427.52 404.98ZM477.45 354.15A61.55 61.55 0 0 1 416.35 293.05A61.55 61.55 0 0 1 477.45 354.15ZM466.28 342.98A51.70 51.70 0 0 1 427.52 304.22A51.70 51.70 0 0 1 466.28 342.98ZM478.35 -17.85A61.55 61.55 0 0 1 539.45 -78.95A61.55 61.55 0 0 1 478.35 -17.85ZM489.52 -29.02A51.70 51.70 0 0 1 528.28 -67.78A51.70 51.70 0 0 1 489.52 -29.02ZM478.35 106.15A61.55 61.55 0 0 1 539.45 45.05A61.55 61.55 0 0 1 478.35 106.15ZM489.52 94.98A51.70 51.70 0 0 1 528.28 56.22A51.70 51.70 0 0 1 489.52 94.98ZM539.45 44.15A61.55 61.55 0 0 1 478.35 -16.95A61.55 61.55 0 0 1 539.45 44.15ZM528.28 32.98A51.70 51.70 0 0 1 489.52 -5.78A51.70 51.70 0 0 1 528.28 32.98ZM478.35 230.15A61.55 61.55 0 0 1 539.45 169.05A61.55 61.55 0 0 1 478.35 230.15ZM489.52 218.98A51.70 51.70 0 0 1 528.28 180.22A51.70 51.70 0 0 1 489.52 218.98ZM539.45 168.15A61.55 61.55 0 0 1 478.35 107.05A61.55 61.55 0 0 1 539.45 168.15ZM528.28 156.98A51.70 51.70 0 0 1 489.52 118.22A51.70 51.70 0 0 1 528.28 156.98ZM478.35 354.15A61.55 61.55 0 0 1 539.45 293.05A61.55 61.55 0 0 1 478.35 354.15ZM489.52 342.98A51.70 51.70 0 0 1 528.28 304.22A51.70 51.70 0 0 1 489.52 342.98ZM539.45 292.15A61.55 61.55 0 0 1 478.35 231.05A61.55 61.55 0 0 1 539.45 292.15ZM528.28 280.98A51.70 51.70 0 0 1 489.52 242.22A51.70 51.70 0 0 1 528.28 280.98ZM539.45 416.15A61.55 61.55 0 0 1 478.35 355.05A61.55 61.55 0 0 1 539.45 416.15ZM528.28 404.98A51.70 51.70 0 0 1 489.52 366.22A51.70 51.70 0 0 1 528.28 404.98ZM540.35 44.15A61.55 61.55 0 0 1 601.45 -16.95A61.55 61.55 0 0 1 540.35 44.15ZM551.52 32.98A51.70 51.70 0 0 1 590.28 -5.78A51.70 51.70 0 0 1 551.52 32.98ZM601.45 -17.85A61.55 61.55 0 0 1 540.35 -78.95A61.55 61.55 0 0 1 601.45 -17.85ZM590.28 -29.02A51.70 51.70 0 0 1 551.52 -67.78A51.70 51.70 0 0 1 590.28 -29.02ZM540.35 168.15A61.55 61.55 0 0 1 601.45 107.05A61.55 61.55 0 0 1 540.35 168.15ZM551.52 156.98A51.70 51.70 0 0 1 590.28 118.22A51.70 51.70 0 0 1 551.52 156.98ZM601.45 106.15A61.55 61.55 0 0 1 540.35 45.05A61.55 61.55 0 0 1 601.45 106.15ZM590.28 94.98A51.70 51.70 0 0 1 551.52 56.22A51.70 51.70 0 0 1 590.28 94.98ZM540.35 292.15A61.55 61.55 0 0 1 601.45 231.05A61.55 61.55 0 0 1 540.35 292.15ZM551.52 280.98A51.70 51.70 0 0 1 590.28 242.22A51.70 51.70 0 0 1 551.52 280.98ZM601.45 230.15A61.55 61.55 0 0 1 540.35 169.05A61.55 61.55 0 0 1 601.45 230.15ZM590.28 218.98A51.70 51.70 0 0 1 551.52 180.22A51.70 51.70 0 0 1 590.28 218.98ZM540.35 416.15A61.55 61.55 0 0 1 601.45 355.05A61.55 61.55 0 0 1 540.35 416.15ZM551.52 404.98A51.70 51.70 0 0 1 590.28 366.22A51.70 51.70 0 0 1 551.52 404.98ZM601.45 354.15A61.55 61.55 0 0 1 540.35 293.05A61.55 61.55 0 0 1 601.45 354.15ZM590.28 342.98A51.70 51.70 0 0 1 551.52 304.22A51.70 51.70 0 0 1 590.28 342.98ZM602.35 -17.85A61.55 61.55 0 0 1 663.45 -78.95A61.55 61.55 0 0 1 602.35 -17.85ZM613.52 -29.02A51.70 51.70 0 0 1 652.28 -67.78A51.70 51.70 0 0 1 613.52 -29.02ZM602.35 106.15A61.55 61.55 0 0 1 663.45 45.05A61.55 61.55 0 0 1 602.35 106.15ZM613.52 94.98A51.70 51.70 0 0 1 652.28 56.22A51.70 51.70 0 0 1 613.52 94.98ZM663.45 44.15A61.55 61.55 0 0 1 602.35 -16.95A61.55 61.55 0 0 1 663.45 44.15ZM652.28 32.98A51.70 51.70 0 0 1 613.52 -5.78A51.70 51.70 0 0 1 652.28 32.98ZM602.35 230.15A61.55 61.55 0 0 1 663.45 169.05A61.55 61.55 0 0 1 602.35 230.15ZM613.52 218.98A51.70 51.70 0 0 1 652.28 180.22A51.70 51.70 0 0 1 613.52 218.98ZM663.45 168.15A61.55 61.55 0 0 1 602.35 107.05A61.55 61.55 0 0 1 663.45 168.15ZM652.28 156.98A51.70 51.70 0 0 1 613.52 118.22A51.70 51.70 0 0 1 652.28 156.98ZM602.35 354.15A61.55 61.55 0 0 1 663.45 293.05A61.55 61.55 0 0 1 602.35 354.15ZM613.52 342.98A51.70 51.70 0 0 1 652.28 304.22A51.70 51.70 0 0 1 613.52 342.98ZM663.45 292.15A61.55 61.55 0 0 1 602.35 231.05A61.55 61.55 0 0 1 663.45 292.15ZM652.28 280.98A51.70 51.70 0 0 1 613.52 242.22A51.70 51.70 0 0 1 652.28 280.98ZM663.45 416.15A61.55 61.55 0 0 1 602.35 355.05A61.55 61.55 0 0 1 663.45 416.15ZM652.28 404.98A51.70 51.70 0 0 1 613.52 366.22A51.70 51.70 0 0 1 652.28 404.98ZM664.35 44.15A61.55 61.55 0 0 1 725.45 -16.95A61.55 61.55 0 0 1 664.35 44.15ZM675.52 32.98A51.70 51.70 0 0 1 714.28 -5.78A51.70 51.70 0 0 1 675.52 32.98ZM725.45 -17.85A61.55 61.55 0 0 1 664.35 -78.95A61.55 61.55 0 0 1 725.45 -17.85ZM714.28 -29.02A51.70 51.70 0 0 1 675.52 -67.78A51.70 51.70 0 0 1 714.28 -29.02ZM664.35 168.15A61.55 61.55 0 0 1 725.45 107.05A61.55 61.55 0 0 1 664.35 168.15ZM675.52 156.98A51.70 51.70 0 0 1 714.28 118.22A51.70 51.70 0 0 1 675.52 156.98ZM725.45 106.15A61.55 61.55 0 0 1 664.35 45.05A61.55 61.55 0 0 1 725.45 106.15ZM714.28 94.98A51.70 51.70 0 0 1 675.52 56.22A51.70 51.70 0 0 1 714.28 94.98ZM664.35 292.15A61.55 61.55 0 0 1 725.45 231.05A61.55 61.55 0 0 1 664.35 292.15ZM675.52 280.98A51.70 51.70 0 0 1 714.28 242.22A51.70 51.70 0 0 1 675.52 280.98ZM725.45 230.15A61.55 61.55 0 0 1 664.35 169.05A61.55 61.55 0 0 1 725.45 230.15ZM714.28 218.98A51.70 51.70 0 0 1 675.52 180.22A51.70 51.70 0 0 1 714.28 218.98ZM664.35 416.15A61.55 61.55 0 0 1 725.45 355.05A61.55 61.55 0 0 1 664.35 416.15ZM675.52 404.98A51.70 51.70 0 0 1 714.28 366.22A51.70 51.70 0 0 1 675.52 404.98ZM725.45 354.15A61.55 61.55 0 0 1 664.35 293.05A61.55 61.55 0 0 1 725.45 354.15ZM714.28 342.98A51.70 51.70 0 0 1 675.52 304.22A51.70 51.70 0 0 1 714.28 342.98ZM726.35 -17.85A61.55 61.55 0 0 1 787.45 -78.95A61.55 61.55 0 0 1 726.35 -17.85ZM737.52 -29.02A51.70 51.70 0 0 1 776.28 -67.78A51.70 51.70 0 0 1 737.52 -29.02ZM726.35 106.15A61.55 61.55 0 0 1 787.45 45.05A61.55 61.55 0 0 1 726.35 106.15ZM737.52 94.98A51.70 51.70 0 0 1 776.28 56.22A51.70 51.70 0 0 1 737.52 94.98ZM787.45 44.15A61.55 61.55 0 0 1 726.35 -16.95A61.55 61.55 0 0 1 787.45 44.15ZM776.28 32.98A51.70 51.70 0 0 1 737.52 -5.78A51.70 51.70 0 0 1 776.28 32.98ZM726.35 230.15A61.55 61.55 0 0 1 787.45 169.05A61.55 61.55 0 0 1 726.35 230.15ZM737.52 218.98A51.70 51.70 0 0 1 776.28 180.22A51.70 51.70 0 0 1 737.52 218.98ZM787.45 168.15A61.55 61.55 0 0 1 726.35 107.05A61.55 61.55 0 0 1 787.45 168.15ZM776.28 156.98A51.70 51.70 0 0 1 737.52 118.22A51.70 51.70 0 0 1 776.28 156.98ZM726.35 354.15A61.55 61.55 0 0 1 787.45 293.05A61.55 61.55 0 0 1 726.35 354.15ZM737.52 342.98A51.70 51.70 0 0 1 776.28 304.22A51.70 51.70 0 0 1 737.52 342.98ZM787.45 292.15A61.55 61.55 0 0 1 726.35 231.05A61.55 61.55 0 0 1 787.45 292.15ZM776.28 280.98A51.70 51.70 0 0 1 737.52 242.22A51.70 51.70 0 0 1 776.28 280.98ZM787.45 416.15A61.55 61.55 0 0 1 726.35 355.05A61.55 61.55 0 0 1 787.45 416.15ZM776.28 404.98A51.70 51.70 0 0 1 737.52 366.22A51.70 51.70 0 0 1 776.28 404.98ZM788.35 44.15A61.55 61.55 0 0 1 849.45 -16.95A61.55 61.55 0 0 1 788.35 44.15ZM799.52 32.98A51.70 51.70 0 0 1 838.28 -5.78A51.70 51.70 0 0 1 799.52 32.98ZM849.45 -17.85A61.55 61.55 0 0 1 788.35 -78.95A61.55 61.55 0 0 1 849.45 -17.85ZM838.28 -29.02A51.70 51.70 0 0 1 799.52 -67.78A51.70 51.70 0 0 1 838.28 -29.02ZM788.35 168.15A61.55 61.55 0 0 1 849.45 107.05A61.55 61.55 0 0 1 788.35 168.15ZM799.52 156.98A51.70 51.70 0 0 1 838.28 118.22A51.70 51.70 0 0 1 799.52 156.98ZM849.45 106.15A61.55 61.55 0 0 1 788.35 45.05A61.55 61.55 0 0 1 849.45 106.15ZM838.28 94.98A51.70 51.70 0 0 1 799.52 56.22A51.70 51.70 0 0 1 838.28 94.98ZM788.35 292.15A61.55 61.55 0 0 1 849.45 231.05A61.55 61.55 0 0 1 788.35 292.15ZM799.52 280.98A51.70 51.70 0 0 1 838.28 242.22A51.70 51.70 0 0 1 799.52 280.98ZM849.45 230.15A61.55 61.55 0 0 1 788.35 169.05A61.55 61.55 0 0 1 849.45 230.15ZM838.28 218.98A51.70 51.70 0 0 1 799.52 180.22A51.70 51.70 0 0 1 838.28 218.98ZM788.35 416.15A61.55 61.55 0 0 1 849.45 355.05A61.55 61.55 0 0 1 788.35 416.15ZM799.52 404.98A51.70 51.70 0 0 1 838.28 366.22A51.70 51.70 0 0 1 799.52 404.98ZM849.45 354.15A61.55 61.55 0 0 1 788.35 293.05A61.55 61.55 0 0 1 849.45 354.15ZM838.28 342.98A51.70 51.70 0 0 1 799.52 304.22A51.70 51.70 0 0 1 838.28 342.98ZM850.35 -17.85A61.55 61.55 0 0 1 911.45 -78.95A61.55 61.55 0 0 1 850.35 -17.85ZM861.52 -29.02A51.70 51.70 0 0 1 900.28 -67.78A51.70 51.70 0 0 1 861.52 -29.02ZM850.35 106.15A61.55 61.55 0 0 1 911.45 45.05A61.55 61.55 0 0 1 850.35 106.15ZM861.52 94.98A51.70 51.70 0 0 1 900.28 56.22A51.70 51.70 0 0 1 861.52 94.98ZM911.45 44.15A61.55 61.55 0 0 1 850.35 -16.95A61.55 61.55 0 0 1 911.45 44.15ZM900.28 32.98A51.70 51.70 0 0 1 861.52 -5.78A51.70 51.70 0 0 1 900.28 32.98ZM850.35 230.15A61.55 61.55 0 0 1 911.45 169.05A61.55 61.55 0 0 1 850.35 230.15ZM861.52 218.98A51.70 51.70 0 0 1 900.28 180.22A51.70 51.70 0 0 1 861.52 218.98ZM911.45 168.15A61.55 61.55 0 0 1 850.35 107.05A61.55 61.55 0 0 1 911.45 168.15ZM900.28 156.98A51.70 51.70 0 0 1 861.52 118.22A51.70 51.70 0 0 1 900.28 156.98ZM850.35 354.15A61.55 61.55 0 0 1 911.45 293.05A61.55 61.55 0 0 1 850.35 354.15ZM861.52 342.98A51.70 51.70 0 0 1 900.28 304.22A51.70 51.70 0 0 1 861.52 342.98ZM911.45 292.15A61.55 61.55 0 0 1 850.35 231.05A61.55 61.55 0 0 1 911.45 292.15ZM900.28 280.98A51.70 51.70 0 0 1 861.52 242.22A51.70 51.70 0 0 1 900.28 280.98ZM911.45 416.15A61.55 61.55 0 0 1 850.35 355.05A61.55 61.55 0 0 1 911.45 416.15ZM900.28 404.98A51.70 51.70 0 0 1 861.52 366.22A51.70 51.70 0 0 1 900.28 404.98ZM912.35 44.15A61.55 61.55 0 0 1 973.45 -16.95A61.55 61.55 0 0 1 912.35 44.15ZM923.52 32.98A51.70 51.70 0 0 1 962.28 -5.78A51.70 51.70 0 0 1 923.52 32.98ZM973.45 -17.85A61.55 61.55 0 0 1 912.35 -78.95A61.55 61.55 0 0 1 973.45 -17.85ZM962.28 -29.02A51.70 51.70 0 0 1 923.52 -67.78A51.70 51.70 0 0 1 962.28 -29.02ZM912.35 168.15A61.55 61.55 0 0 1 973.45 107.05A61.55 61.55 0 0 1 912.35 168.15ZM923.52 156.98A51.70 51.70 0 0 1 962.28 118.22A51.70 51.70 0 0 1 923.52 156.98ZM973.45 106.15A61.55 61.55 0 0 1 912.35 45.05A61.55 61.55 0 0 1 973.45 106.15ZM962.28 94.98A51.70 51.70 0 0 1 923.52 56.22A51.70 51.70 0 0 1 962.28 94.98ZM912.35 292.15A61.55 61.55 0 0 1 973.45 231.05A61.55 61.55 0 0 1 912.35 292.15ZM923.52 280.98A51.70 51.70 0 0 1 962.28 242.22A51.70 51.70 0 0 1 923.52 280.98ZM973.45 230.15A61.55 61.55 0 0 1 912.35 169.05A61.55 61.55 0 0 1 973.45 230.15ZM962.28 218.98A51.70 51.70 0 0 1 923.52 180.22A51.70 51.70 0 0 1 962.28 218.98ZM912.35 416.15A61.55 61.55 0 0 1 973.45 355.05A61.55 61.55 0 0 1 912.35 416.15ZM923.52 404.98A51.70 51.70 0 0 1 962.28 366.22A51.70 51.70 0 0 1 923.52 404.98ZM973.45 354.15A61.55 61.55 0 0 1 912.35 293.05A61.55 61.55 0 0 1 973.45 354.15ZM962.28 342.98A51.70 51.70 0 0 1 923.52 304.22A51.70 51.70 0 0 1 962.28 342.98Z"/></g></svg>
<svg width="893" height="504" style="position:absolute;left:0;top:0">
<rect x="32.5" y="363.5" width="572" height="110" fill="none" stroke="#5a5a5a" stroke-width="1" stroke-dasharray="2 1"/>
<rect x="630.5" y="363.5" width="236" height="110" fill="none" stroke="#5a5a5a" stroke-width="1" stroke-dasharray="2 1"/>
<rect x="615" y="387.5" width="1.3" height="67" fill="#3d6f8a"/>
</svg>
</div>
<!-- thumbnail -->
<div class="a" style="left:41.8px;top:214px;width:151.7px;height:89.8px;background:#c8502c"></div>
<div class="a" style="left:45.5px;top:218px;width:145.3px;height:83.3px;overflow:hidden"><svg width="145.3" height="83.3" viewBox="0 0 145.3 83.3" style="position:absolute;left:0;top:0"><defs><clipPath id="pc145"><rect x="0" y="0" width="145.3" height="54.605464725643905"/></clipPath></defs><rect width="145.3" height="83.3" fill="#fff"/><g clip-path="url(#pc145)"><rect width="145.3" height="54.605464725643905" fill="#1681b2"/><path fill="#fff" fill-rule="evenodd" d="M-12.96 7.18A10.01 10.01 0 0 1 -3.02 -2.76A10.01 10.01 0 0 1 -12.96 7.18ZM-11.62 5.84A8.79 8.79 0 0 1 -4.36 -1.41A8.79 8.79 0 0 1 -11.62 5.84ZM-3.02 -2.90A10.01 10.01 0 0 1 -12.96 -12.85A10.01 10.01 0 0 1 -3.02 -2.90ZM-4.36 -4.25A8.79 8.79 0 0 1 -11.62 -11.50A8.79 8.79 0 0 1 -4.36 -4.25ZM-12.96 27.36A10.01 10.01 0 0 1 -3.02 17.42A10.01 10.01 0 0 1 -12.96 27.36ZM-11.62 26.02A8.79 8.79 0 0 1 -4.36 18.76A8.79 8.79 0 0 1 -11.62 26.02ZM-3.02 17.27A10.01 10.01 0 0 1 -12.96 7.33A10.01 10.01 0 0 1 -3.02 17.27ZM-4.36 15.93A8.79 8.79 0 0 1 -11.62 8.67A8.79 8.79 0 0 1 -4.36 15.93ZM-12.96 47.54A10.01 10.01 0 0 1 -3.02 37.59A10.01 10.01 0 0 1 -12.96 47.54ZM-11.62 46.19A8.79 8.79 0 0 1 -4.36 38.94A8.79 8.79 0 0 1 -11.62 46.19ZM-3.02 37.45A10.01 10.01 0 0 1 -12.96 27.51A10.01 10.01 0 0 1 -3.02 37.45ZM-4.36 36.10A8.79 8.79 0 0 1 -11.62 28.85A8.79 8.79 0 0 1 -4.36 36.10ZM-12.96 67.71A10.01 10.01 0 0 1 -3.02 57.77A10.01 10.01 0 0 1 -12.96 67.71ZM-11.62 66.37A8.79 8.79 0 0 1 -4.36 59.11A8.79 8.79 0 0 1 -11.62 66.37ZM-3.02 57.62A10.01 10.01 0 0 1 -12.96 47.68A10.01 10.01 0 0 1 -3.02 57.62ZM-4.36 56.28A8.79 8.79 0 0 1 -11.62 49.03A8.79 8.79 0 0 1 -4.36 56.28ZM-2.87 -2.90A10.01 10.01 0 0 1 7.07 -12.85A10.01 10.01 0 0 1 -2.87 -2.90ZM-1.53 -4.25A8.79 8.79 0 0 1 5.73 -11.50A8.79 8.79 0 0 1 -1.53 -4.25ZM-2.87 17.27A10.01 10.01 0 0 1 7.07 7.33A10.01 10.01 0 0 1 -2.87 17.27ZM-1.53 15.93A8.79 8.79 0 0 1 5.73 8.67A8.79 8.79 0 0 1 -1.53 15.93ZM7.07 7.18A10.01 10.01 0 0 1 -2.87 -2.76A10.01 10.01 0 0 1 7.07 7.18ZM5.73 5.84A8.79 8.79 0 0 1 -1.53 -1.41A8.79 8.79 0 0 1 5.73 5.84ZM-2.87 37.45A10.01 10.01 0 0 1 7.07 27.51A10.01 10.01 0 0 1 -2.87 37.45ZM-1.53 36.10A8.79 8.79 0 0 1 5.73 28.85A8.79 8.79 0 0 1 -1.53 36.10ZM7.07 27.36A10.01 10.01 0 0 1 -2.87 17.42A10.01 10.01 0 0 1 7.07 27.36ZM5.73 26.02A8.79 8.79 0 0 1 -1.53 18.76A8.79 8.79 0 0 1 5.73 26.02ZM-2.87 57.62A10.01 10.01 0 0 1 7.07 47.68A10.01 10.01 0 0 1 -2.87 57.62ZM-1.53 56.28A8.79 8.79 0 0 1 5.73 49.03A8.79 8.79 0 0 1 -1.53 56.28ZM7.07 47.54A10.01 10.01 0 0 1 -2.87 37.59A10.01 10.01 0 0 1 7.07 47.54ZM5.73 46.19A8.79 8.79 0 0 1 -1.53 38.94A8.79 8.79 0 0 1 5.73 46.19ZM7.07 67.71A10.01 10.01 0 0 1 -2.87 57.77A10.01 10.01 0 0 1 7.07 67.71ZM5.73 66.37A8.79 8.79 0 0 1 -1.53 59.11A8.79 8.79 0 0 1 5.73 66.37ZM7.22 7.18A10.01 10.01 0 0 1 17.16 -2.76A10.01 10.01 0 0 1 7.22 7.18ZM8.56 5.84A8.79 8.79 0 0 1 15.81 -1.41A8.79 8.79 0 0 1 8.56 5.84ZM17.16 -2.90A10.01 10.01 0 0 1 7.22 -12.85A10.01 10.01 0 0 1 17.16 -2.90ZM15.81 -4.25A8.79 8.79 0 0 1 8.56 -11.50A8.79 8.79 0 0 1 15.81 -4.25ZM7.22 27.36A10.01 10.01 0 0 1 17.16 17.42A10.01 10.01 0 0 1 7.22 27.36ZM8.56 26.02A8.79 8.79 0 0 1 15.81 18.76A8.79 8.79 0 0 1 8.56 26.02ZM17.16 17.27A10.01 10.01 0 0 1 7.22 7.33A10.01 10.01 0 0 1 17.16 17.27ZM15.81 15.93A8.79 8.79 0 0 1 8.56 8.67A8.79 8.79 0 0 1 15.81 15.93ZM7.22 47.54A10.01 10.01 0 0 1 17.16 37.59A10.01 10.01 0 0 1 7.22 47.54ZM8.56 46.19A8.79 8.79 0 0 1 15.81 38.94A8.79 8.79 0 0 1 8.56 46.19ZM17.16 37.45A10.01 10.01 0 0 1 7.22 27.51A10.01 10.01 0 0 1 17.16 37.45ZM15.81 36.10A8.79 8.79 0 0 1 8.56 28.85A8.79 8.79 0 0 1 15.81 36.10ZM7.22 67.71A10.01 10.01 0 0 1 17.16 57.77A10.01 10.01 0 0 1 7.22 67.71ZM8.56 66.37A8.79 8.79 0 0 1 15.81 59.11A8.79 8.79 0 0 1 8.56 66.37ZM17.16 57.62A10.01 10.01 0 0 1 7.22 47.68A10.01 10.01 0 0 1 17.16 57.62ZM15.81 56.28A8.79 8.79 0 0 1 8.56 49.03A8.79 8.79 0 0 1 15.81 56.28ZM17.30 -2.90A10.01 10.01 0 0 1 27.25 -12.85A10.01 10.01 0 0 1 17.30 -2.90ZM18.65 -4.25A8.79 8.79 0 0 1 25.90 -11.50A8.79 8.79 0 0 1 18.65 -4.25ZM17.30 17.27A10.01 10.01 0 0 1 27.25 7.33A10.01 10.01 0 0 1 17.30 17.27ZM18.65 15.93A8.79 8.79 0 0 1 25.90 8.67A8.79 8.79 0 0 1 18.65 15.93ZM27.25 7.18A10.01 10.01 0 0 1 17.30 -2.76A10.01 10.01 0 0 1 27.25 7.18ZM25.90 5.84A8.79 8.79 0 0 1 18.65 -1.41A8.79 8.79 0 0 1 25.90 5.84ZM17.30 37.45A10.01 10.01 0 0 1 27.25 27.51A10.01 10.01 0 0 1 17.30 37.45ZM18.65 36.10A8.79 8.79 0 0 1 25.90 28.85A8.79 8.79 0 0 1 18.65 36.10ZM27.25 27.36A10.01 10.01 0 0 1 17.30 17.42A10.01 10.01 0 0 1 27.25 27.36ZM25.90 26.02A8.79 8.79 0 0 1 18.65 18.76A8.79 8.79 0 0 1 25.90 26.02ZM17.30 57.62A10.01 10.01 0 0 1 27.25 47.68A10.01 10.01 0 0 1 17.30 57.62ZM18.65 56.28A8.79 8.79 0 0 1 25.90 49.03A8.79 8.79 0 0 1 18.65 56.28ZM27.25 47.54A10.01 10.01 0 0 1 17.30 37.59A10.01 10.01 0 0 1 27.25 47.54ZM25.90 46.19A8.79 8.79 0 0 1 18.65 38.94A8.79 8.79 0 0 1 25.90 46.19ZM27.25 67.71A10.01 10.01 0 0 1 17.30 57.77A10.01 10.01 0 0 1 27.25 67.71ZM25.90 66.37A8.79 8.79 0 0 1 18.65 59.11A8.79 8.79 0 0 1 25.90 66.37ZM27.39 7.18A10.01 10.01 0 0 1 37.33 -2.76A10.01 10.01 0 0 1 27.39 7.18ZM28.74 5.84A8.79 8.79 0 0 1 35.99 -1.41A8.79 8.79 0 0 1 28.74 5.84ZM37.33 -2.90A10.01 10.01 0 0 1 27.39 -12.85A10.01 10.01 0 0 1 37.33 -2.90ZM35.99 -4.25A8.79 8.79 0 0 1 28.74 -11.50A8.79 8.79 0 0 1 35.99 -4.25ZM27.39 27.36A10.01 10.01 0 0 1 37.33 17.42A10.01 10.01 0 0 1 27.39 27.36ZM28.74 26.02A8.79 8.79 0 0 1 35.99 18.76A8.79 8.79 0 0 1 28.74 26.02ZM37.33 17.27A10.01 10.01 0 0 1 27.39 7.33A10.01 10.01 0 0 1 37.33 17.27ZM35.99 15.93A8.79 8.79 0 0 1 28.74 8.67A8.79 8.79 0 0 1 35.99 15.93ZM27.39 47.54A10.01 10.01 0 0 1 37.33 37.59A10.01 10.01 0 0 1 27.39 47.54ZM28.74 46.19A8.79 8.79 0 0 1 35.99 38.94A8.79 8.79 0 0 1 28.74 46.19ZM37.33 37.45A10.01 10.01 0 0 1 27.39 27.51A10.01 10.01 0 0 1 37.33 37.45ZM35.99 36.10A8.79 8.79 0 0 1 28.74 28.85A8.79 8.79 0 0 1 35.99 36.10ZM27.39 67.71A10.01 10.01 0 0 1 37.33 57.77A10.01 10.01 0 0 1 27.39 67.71ZM28.74 66.37A8.79 8.79 0 0 1 35.99 59.11A8.79 8.79 0 0 1 28.74 66.37ZM37.33 57.62A10.01 10.01 0 0 1 27.39 47.68A10.01 10.01 0 0 1 37.33 57.62ZM35.99 56.28A8.79 8.79 0 0 1 28.74 49.03A8.79 8.79 0 0 1 35.99 56.28ZM37.48 -2.90A10.01 10.01 0 0 1 47.42 -12.85A10.01 10.01 0 0 1 37.48 -2.90ZM38.82 -4.25A8.79 8.79 0 0 1 46.08 -11.50A8.79 8.79 0 0 1 38.82 -4.25ZM37.48 17.27A10.01 10.01 0 0 1 47.42 7.33A10.01 10.01 0 0 1 37.48 17.27ZM38.82 15.93A8.79 8.79 0 0 1 46.08 8.67A8.79 8.79 0 0 1 38.82 15.93ZM47.42 7.18A10.01 10.01 0 0 1 37.48 -2.76A10.01 10.01 0 0 1 47.42 7.18ZM46.08 5.84A8.79 8.79 0 0 1 38.82 -1.41A8.79 8.79 0 0 1 46.08 5.84ZM37.48 37.45A10.01 10.01 0 0 1 47.42 27.51A10.01 10.01 0 0 1 37.48 37.45ZM38.82 36.10A8.79 8.79 0 0 1 46.08 28.85A8.79 8.79 0 0 1 38.82 36.10ZM47.42 27.36A10.01 10.01 0 0 1 37.48 17.42A10.01 10.01 0 0 1 47.42 27.36ZM46.08 26.02A8.79 8.79 0 0 1 38.82 18.76A8.79 8.79 0 0 1 46.08 26.02ZM37.48 57.62A10.01 10.01 0 0 1 47.42 47.68A10.01 10.01 0 0 1 37.48 57.62ZM38.82 56.28A8.79 8.79 0 0 1 46.08 49.03A8.79 8.79 0 0 1 38.82 56.28ZM47.42 47.54A10.01 10.01 0 0 1 37.48 37.59A10.01 10.01 0 0 1 47.42 47.54ZM46.08 46.19A8.79 8.79 0 0 1 38.82 38.94A8.79 8.79 0 0 1 46.08 46.19ZM47.42 67.71A10.01 10.01 0 0 1 37.48 57.77A10.01 10.01 0 0 1 47.42 67.71ZM46.08 66.37A8.79 8.79 0 0 1 38.82 59.11A8.79 8.79 0 0 1 46.08 66.37ZM47.57 7.18A10.01 10.01 0 0 1 57.51 -2.76A10.01 10.01 0 0 1 47.57 7.18ZM48.91 5.84A8.79 8.79 0 0 1 56.17 -1.41A8.79 8.79 0 0 1 48.91 5.84ZM57.51 -2.90A10.01 10.01 0 0 1 47.57 -12.85A10.01 10.01 0 0 1 57.51 -2.90ZM56.17 -4.25A8.79 8.79 0 0 1 48.91 -11.50A8.79 8.79 0 0 1 56.17 -4.25ZM47.57 27.36A10.01 10.01 0 0 1 57.51 17.42A10.01 10.01 0 0 1 47.57 27.36ZM48.91 26.02A8.79 8.79 0 0 1 56.17 18.76A8.79 8.79 0 0 1 48.91 26.02ZM57.51 17.27A10.01 10.01 0 0 1 47.57 7.33A10.01 10.01 0 0 1 57.51 17.27ZM56.17 15.93A8.79 8.79 0 0 1 48.91 8.67A8.79 8.79 0 0 1 56.17 15.93ZM47.57 47.54A10.01 10.01 0 0 1 57.51 37.59A10.01 10.01 0 0 1 47.57 47.54ZM48.91 46.19A8.79 8.79 0 0 1 56.17 38.94A8.79 8.79 0 0 1 48.91 46.19ZM57.51 37.45A10.01 10.01 0 0 1 47.57 27.51A10.01 10.01 0 0 1 57.51 37.45ZM56.17 36.10A8.79 8.79 0 0 1 48.91 28.85A8.79 8.79 0 0 1 56.17 36.10ZM47.57 67.71A10.01 10.01 0 0 1 57.51 57.77A10.01 10.01 0 0 1 47.57 67.71ZM48.91 66.37A8.79 8.79 0 0 1 56.17 59.11A8.79 8.79 0 0 1 48.91 66.37ZM57.51 57.62A10.01 10.01 0 0 1 47.57 47.68A10.01 10.01 0 0 1 57.51 57.62ZM56.17 56.28A8.79 8.79 0 0 1 48.91 49.03A8.79 8.79 0 0 1 56.17 56.28ZM57.66 -2.90A10.01 10.01 0 0 1 67.60 -12.85A10.01 10.01 0 0 1 57.66 -2.90ZM59.00 -4.25A8.79 8.79 0 0 1 66.25 -11.50A8.79 8.79 0 0 1 59.00 -4.25ZM57.66 17.27A10.01 10.01 0 0 1 67.60 7.33A10.01 10.01 0 0 1 57.66 17.27ZM59.00 15.93A8.79 8.79 0 0 1 66.25 8.67A8.79 8.79 0 0 1 59.00 15.93ZM67.60 7.18A10.01 10.01 0 0 1 57.66 -2.76A10.01 10.01 0 0 1 67.60 7.18ZM66.25 5.84A8.79 8.79 0 0 1 59.00 -1.41A8.79 8.79 0 0 1 66.25 5.84ZM57.66 37.45A10.01 10.01 0 0 1 67.60 27.51A10.01 10.01 0 0 1 57.66 37.45ZM59.00 36.10A8.79 8.79 0 0 1 66.25 28.85A8.79 8.79 0 0 1 59.00 36.10ZM67.60 27.36A10.01 10.01 0 0 1 57.66 17.42A10.01 10.01 0 0 1 67.60 27.36ZM66.25 26.02A8.79 8.79 0 0 1 59.00 18.76A8.79 8.79 0 0 1 66.25 26.02ZM57.66 57.62A10.01 10.01 0 0 1 67.60 47.68A10.01 10.01 0 0 1 57.66 57.62ZM59.00 56.28A8.79 8.79 0 0 1 66.25 49.03A8.79 8.79 0 0 1 59.00 56.28ZM67.60 47.54A10.01 10.01 0 0 1 57.66 37.59A10.01 10.01 0 0 1 67.60 47.54ZM66.25 46.19A8.79 8.79 0 0 1 59.00 38.94A8.79 8.79 0 0 1 66.25 46.19ZM67.60 67.71A10.01 10.01 0 0 1 57.66 57.77A10.01 10.01 0 0 1 67.60 67.71ZM66.25 66.37A8.79 8.79 0 0 1 59.00 59.11A8.79 8.79 0 0 1 66.25 66.37ZM67.74 7.18A10.01 10.01 0 0 1 77.69 -2.76A10.01 10.01 0 0 1 67.74 7.18ZM69.09 5.84A8.79 8.79 0 0 1 76.34 -1.41A8.79 8.79 0 0 1 69.09 5.84ZM77.69 -2.90A10.01 10.01 0 0 1 67.74 -12.85A10.01 10.01 0 0 1 77.69 -2.90ZM76.34 -4.25A8.79 8.79 0 0 1 69.09 -11.50A8.79 8.79 0 0 1 76.34 -4.25ZM67.74 27.36A10.01 10.01 0 0 1 77.69 17.42A10.01 10.01 0 0 1 67.74 27.36ZM69.09 26.02A8.79 8.79 0 0 1 76.34 18.76A8.79 8.79 0 0 1 69.09 26.02ZM77.69 17.27A10.01 10.01 0 0 1 67.74 7.33A10.01 10.01 0 0 1 77.69 17.27ZM76.34 15.93A8.79 8.79 0 0 1 69.09 8.67A8.79 8.79 0 0 1 76.34 15.93ZM67.74 47.54A10.01 10.01 0 0 1 77.69 37.59A10.01 10.01 0 0 1 67.74 47.54ZM69.09 46.19A8.79 8.79 0 0 1 76.34 38.94A8.79 8.79 0 0 1 69.09 46.19ZM77.69 37.45A10.01 10.01 0 0 1 67.74 27.51A10.01 10.01 0 0 1 77.69 37.45ZM76.34 36.10A8.79 8.79 0 0 1 69.09 28.85A8.79 8.79 0 0 1 76.34 36.10ZM67.74 67.71A10.01 10.01 0 0 1 77.69 57.77A10.01 10.01 0 0 1 67.74 67.71ZM69.09 66.37A8.79 8.79 0 0 1 76.34 59.11A8.79 8.79 0 0 1 69.09 66.37ZM77.69 57.62A10.01 10.01 0 0 1 67.74 47.68A10.01 10.01 0 0 1 77.69 57.62ZM76.34 56.28A8.79 8.79 0 0 1 69.09 49.03A8.79 8.79 0 0 1 76.34 56.28ZM77.83 -2.90A10.01 10.01 0 0 1 87.77 -12.85A10.01 10.01 0 0 1 77.83 -2.90ZM79.18 -4.25A8.79 8.79 0 0 1 86.43 -11.50A8.79 8.79 0 0 1 79.18 -4.25ZM77.83 17.27A10.01 10.01 0 0 1 87.77 7.33A10.01 10.01 0 0 1 77.83 17.27ZM79.18 15.93A8.79 8.79 0 0 1 86.43 8.67A8.79 8.79 0 0 1 79.18 15.93ZM87.77 7.18A10.01 10.01 0 0 1 77.83 -2.76A10.01 10.01 0 0 1 87.77 7.18ZM86.43 5.84A8.79 8.79 0 0 1 79.18 -1.41A8.79 8.79 0 0 1 86.43 5.84ZM77.83 37.45A10.01 10.01 0 0 1 87.77 27.51A10.01 10.01 0 0 1 77.83 37.45ZM79.18 36.10A8.79 8.79 0 0 1 86.43 28.85A8.79 8.79 0 0 1 79.18 36.10ZM87.77 27.36A10.01 10.01 0 0 1 77.83 17.42A10.01 10.01 0 0 1 87.77 27.36ZM86.43 26.02A8.79 8.79 0 0 1 79.18 18.76A8.79 8.79 0 0 1 86.43 26.02ZM77.83 57.62A10.01 10.01 0 0 1 87.77 47.68A10.01 10.01 0 0 1 77.83 57.62ZM79.18 56.28A8.79 8.79 0 0 1 86.43 49.03A8.79 8.79 0 0 1 79.18 56.28ZM87.77 47.54A10.01 10.01 0 0 1 77.83 37.59A10.01 10.01 0 0 1 87.77 47.54ZM86.43 46.19A8.79 8.79 0 0 1 79.18 38.94A8.79 8.79 0 0 1 86.43 46.19ZM87.77 67.71A10.01 10.01 0 0 1 77.83 57.77A10.01 10.01 0 0 1 87.77 67.71ZM86.43 66.37A8.79 8.79 0 0 1 79.18 59.11A8.79 8.79 0 0 1 86.43 66.37ZM87.92 7.18A10.01 10.01 0 0 1 97.86 -2.76A10.01 10.01 0 0 1 87.92 7.18ZM89.26 5.84A8.79 8.79 0 0 1 96.52 -1.41A8.79 8.79 0 0 1 89.26 5.84ZM97.86 -2.90A10.01 10.01 0 0 1 87.92 -12.85A10.01 10.01 0 0 1 97.86 -2.90ZM96.52 -4.25A8.79 8.79 0 0 1 89.26 -11.50A8.79 8.79 0 0 1 96.52 -4.25ZM87.92 27.36A10.01 10.01 0 0 1 97.86 17.42A10.01 10.01 0 0 1 87.92 27.36ZM89.26 26.02A8.79 8.79 0 0 1 96.52 18.76A8.79 8.79 0 0 1 89.26 26.02ZM97.86 17.27A10.01 10.01 0 0 1 87.92 7.33A10.01 10.01 0 0 1 97.86 17.27ZM96.52 15.93A8.79 8.79 0 0 1 89.26 8.67A8.79 8.79 0 0 1 96.52 15.93ZM87.92 47.54A10.01 10.01 0 0 1 97.86 37.59A10.01 10.01 0 0 1 87.92 47.54ZM89.26 46.19A8.79 8.79 0 0 1 96.52 38.94A8.79 8.79 0 0 1 89.26 46.19ZM97.86 37.45A10.01 10.01 0 0 1 87.92 27.51A10.01 10.01 0 0 1 97.86 37.45ZM96.52 36.10A8.79 8.79 0 0 1 89.26 28.85A8.79 8.79 0 0 1 96.52 36.10ZM87.92 67.71A10.01 10.01 0 0 1 97.86 57.77A10.01 10.01 0 0 1 87.92 67.71ZM89.26 66.37A8.79 8.79 0 0 1 96.52 59.11A8.79 8.79 0 0 1 89.26 66.37ZM97.86 57.62A10.01 10.01 0 0 1 87.92 47.68A10.01 10.01 0 0 1 97.86 57.62ZM96.52 56.28A8.79 8.79 0 0 1 89.26 49.03A8.79 8.79 0 0 1 96.52 56.28ZM98.01 -2.90A10.01 10.01 0 0 1 107.95 -12.85A10.01 10.01 0 0 1 98.01 -2.90ZM99.35 -4.25A8.79 8.79 0 0 1 106.61 -11.50A8.79 8.79 0 0 1 99.35 -4.25ZM98.01 17.27A10.01 10.01 0 0 1 107.95 7.33A10.01 10.01 0 0 1 98.01 17.27ZM99.35 15.93A8.79 8.79 0 0 1 106.61 8.67A8.79 8.79 0 0 1 99.35 15.93ZM107.95 7.18A10.01 10.01 0 0 1 98.01 -2.76A10.01 10.01 0 0 1 107.95 7.18ZM106.61 5.84A8.79 8.79 0 0 1 99.35 -1.41A8.79 8.79 0 0 1 106.61 5.84ZM98.01 37.45A10.01 10.01 0 0 1 107.95 27.51A10.01 10.01 0 0 1 98.01 37.45ZM99.35 36.10A8.79 8.79 0 0 1 106.61 28.85A8.79 8.79 0 0 1 99.35 36.10ZM107.95 27.36A10.01 10.01 0 0 1 98.01 17.42A10.01 10.01 0 0 1 107.95 27.36ZM106.61 26.02A8.79 8.79 0 0 1 99.35 18.76A8.79 8.79 0 0 1 106.61 26.02ZM98.01 57.62A10.01 10.01 0 0 1 107.95 47.68A10.01 10.01 0 0 1 98.01 57.62ZM99.35 56.28A8.79 8.79 0 0 1 106.61 49.03A8.79 8.79 0 0 1 99.35 56.28ZM107.95 47.54A10.01 10.01 0 0 1 98.01 37.59A10.01 10.01 0 0 1 107.95 47.54ZM106.61 46.19A8.79 8.79 0 0 1 99.35 38.94A8.79 8.79 0 0 1 106.61 46.19ZM107.95 67.71A10.01 10.01 0 0 1 98.01 57.77A10.01 10.01 0 0 1 107.95 67.71ZM106.61 66.37A8.79 8.79 0 0 1 99.35 59.11A8.79 8.79 0 0 1 106.61 66.37ZM108.10 7.18A10.01 10.01 0 0 1 118.04 -2.76A10.01 10.01 0 0 1 108.10 7.18ZM109.44 5.84A8.79 8.79 0 0 1 116.69 -1.41A8.79 8.79 0 0 1 109.44 5.84ZM118.04 -2.90A10.01 10.01 0 0 1 108.10 -12.85A10.01 10.01 0 0 1 118.04 -2.90ZM116.69 -4.25A8.79 8.79 0 0 1 109.44 -11.50A8.79 8.79 0 0 1 116.69 -4.25ZM108.10 27.36A10.01 10.01 0 0 1 118.04 17.42A10.01 10.01 0 0 1 108.10 27.36ZM109.44 26.02A8.79 8.79 0 0 1 116.69 18.76A8.79 8.79 0 0 1 109.44 26.02ZM118.04 17.27A10.01 10.01 0 0 1 108.10 7.33A10.01 10.01 0 0 1 118.04 17.27ZM116.69 15.93A8.79 8.79 0 0 1 109.44 8.67A8.79 8.79 0 0 1 116.69 15.93ZM108.10 47.54A10.01 10.01 0 0 1 118.04 37.59A10.01 10.01 0 0 1 108.10 47.54ZM109.44 46.19A8.79 8.79 0 0 1 116.69 38.94A8.79 8.79 0 0 1 109.44 46.19ZM118.04 37.45A10.01 10.01 0 0 1 108.10 27.51A10.01 10.01 0 0 1 118.04 37.45ZM116.69 36.10A8.79 8.79 0 0 1 109.44 28.85A8.79 8.79 0 0 1 116.69 36.10ZM108.10 67.71A10.01 10.01 0 0 1 118.04 57.77A10.01 10.01 0 0 1 108.10 67.71ZM109.44 66.37A8.79 8.79 0 0 1 116.69 59.11A8.79 8.79 0 0 1 109.44 66.37ZM118.04 57.62A10.01 10.01 0 0 1 108.10 47.68A10.01 10.01 0 0 1 118.04 57.62ZM116.69 56.28A8.79 8.79 0 0 1 109.44 49.03A8.79 8.79 0 0 1 116.69 56.28ZM118.18 -2.90A10.01 10.01 0 0 1 128.13 -12.85A10.01 10.01 0 0 1 118.18 -2.90ZM119.53 -4.25A8.79 8.79 0 0 1 126.78 -11.50A8.79 8.79 0 0 1 119.53 -4.25ZM118.18 17.27A10.01 10.01 0 0 1 128.13 7.33A10.01 10.01 0 0 1 118.18 17.27ZM119.53 15.93A8.79 8.79 0 0 1 126.78 8.67A8.79 8.79 0 0 1 119.53 15.93ZM128.13 7.18A10.01 10.01 0 0 1 118.18 -2.76A10.01 10.01 0 0 1 128.13 7.18ZM126.78 5.84A8.79 8.79 0 0 1 119.53 -1.41A8.79 8.79 0 0 1 126.78 5.84ZM118.18 37.45A10.01 10.01 0 0 1 128.13 27.51A10.01 10.01 0 0 1 118.18 37.45ZM119.53 36.10A8.79 8.79 0 0 1 126.78 28.85A8.79 8.79 0 0 1 119.53 36.10ZM128.13 27.36A10.01 10.01 0 0 1 118.18 17.42A10.01 10.01 0 0 1 128.13 27.36ZM126.78 26.02A8.79 8.79 0 0 1 119.53 18.76A8.79 8.79 0 0 1 126.78 26.02ZM118.18 57.62A10.01 10.01 0 0 1 128.13 47.68A10.01 10.01 0 0 1 118.18 57.62ZM119.53 56.28A8.79 8.79 0 0 1 126.78 49.03A8.79 8.79 0 0 1 119.53 56.28ZM128.13 47.54A10.01 10.01 0 0 1 118.18 37.59A10.01 10.01 0 0 1 128.13 47.54ZM126.78 46.19A8.79 8.79 0 0 1 119.53 38.94A8.79 8.79 0 0 1 126.78 46.19ZM128.13 67.71A10.01 10.01 0 0 1 118.18 57.77A10.01 10.01 0 0 1 128.13 67.71ZM126.78 66.37A8.79 8.79 0 0 1 119.53 59.11A8.79 8.79 0 0 1 126.78 66.37ZM128.27 7.18A10.01 10.01 0 0 1 138.21 -2.76A10.01 10.01 0 0 1 128.27 7.18ZM129.62 5.84A8.79 8.79 0 0 1 136.87 -1.41A8.79 8.79 0 0 1 129.62 5.84ZM138.21 -2.90A10.01 10.01 0 0 1 128.27 -12.85A10.01 10.01 0 0 1 138.21 -2.90ZM136.87 -4.25A8.79 8.79 0 0 1 129.62 -11.50A8.79 8.79 0 0 1 136.87 -4.25ZM128.27 27.36A10.01 10.01 0 0 1 138.21 17.42A10.01 10.01 0 0 1 128.27 27.36ZM129.62 26.02A8.79 8.79 0 0 1 136.87 18.76A8.79 8.79 0 0 1 129.62 26.02ZM138.21 17.27A10.01 10.01 0 0 1 128.27 7.33A10.01 10.01 0 0 1 138.21 17.27ZM136.87 15.93A8.79 8.79 0 0 1 129.62 8.67A8.79 8.79 0 0 1 136.87 15.93ZM128.27 47.54A10.01 10.01 0 0 1 138.21 37.59A10.01 10.01 0 0 1 128.27 47.54ZM129.62 46.19A8.79 8.79 0 0 1 136.87 38.94A8.79 8.79 0 0 1 129.62 46.19ZM138.21 37.45A10.01 10.01 0 0 1 128.27 27.51A10.01 10.01 0 0 1 138.21 37.45ZM136.87 36.10A8.79 8.79 0 0 1 129.62 28.85A8.79 8.79 0 0 1 136.87 36.10ZM128.27 67.71A10.01 10.01 0 0 1 138.21 57.77A10.01 10.01 0 0 1 128.27 67.71ZM129.62 66.37A8.79 8.79 0 0 1 136.87 59.11A8.79 8.79 0 0 1 129.62 66.37ZM138.21 57.62A10.01 10.01 0 0 1 128.27 47.68A10.01 10.01 0 0 1 138.21 57.62ZM136.87 56.28A8.79 8.79 0 0 1 129.62 49.03A8.79 8.79 0 0 1 136.87 56.28ZM138.36 -2.90A10.01 10.01 0 0 1 148.30 -12.85A10.01 10.01 0 0 1 138.36 -2.90ZM139.70 -4.25A8.79 8.79 0 0 1 146.96 -11.50A8.79 8.79 0 0 1 139.70 -4.25ZM138.36 17.27A10.01 10.01 0 0 1 148.30 7.33A10.01 10.01 0 0 1 138.36 17.27ZM139.70 15.93A8.79 8.79 0 0 1 146.96 8.67A8.79 8.79 0 0 1 139.70 15.93ZM148.30 7.18A10.01 10.01 0 0 1 138.36 -2.76A10.01 10.01 0 0 1 148.30 7.18ZM146.96 5.84A8.79 8.79 0 0 1 139.70 -1.41A8.79 8.79 0 0 1 146.96 5.84ZM138.36 37.45A10.01 10.01 0 0 1 148.30 27.51A10.01 10.01 0 0 1 138.36 37.45ZM139.70 36.10A8.79 8.79 0 0 1 146.96 28.85A8.79 8.79 0 0 1 139.70 36.10ZM148.30 27.36A10.01 10.01 0 0 1 138.36 17.42A10.01 10.01 0 0 1 148.30 27.36ZM146.96 26.02A8.79 8.79 0 0 1 139.70 18.76A8.79 8.79 0 0 1 146.96 26.02ZM138.36 57.62A10.01 10.01 0 0 1 148.30 47.68A10.01 10.01 0 0 1 138.36 57.62ZM139.70 56.28A8.79 8.79 0 0 1 146.96 49.03A8.79 8.79 0 0 1 139.70 56.28ZM148.30 47.54A10.01 10.01 0 0 1 138.36 37.59A10.01 10.01 0 0 1 148.30 47.54ZM146.96 46.19A8.79 8.79 0 0 1 139.70 38.94A8.79 8.79 0 0 1 146.96 46.19ZM148.30 67.71A10.01 10.01 0 0 1 138.36 57.77A10.01 10.01 0 0 1 148.30 67.71ZM146.96 66.37A8.79 8.79 0 0 1 139.70 59.11A8.79 8.79 0 0 1 146.96 66.37ZM148.45 7.18A10.01 10.01 0 0 1 158.39 -2.76A10.01 10.01 0 0 1 148.45 7.18ZM149.79 5.84A8.79 8.79 0 0 1 157.05 -1.41A8.79 8.79 0 0 1 149.79 5.84ZM158.39 -2.90A10.01 10.01 0 0 1 148.45 -12.85A10.01 10.01 0 0 1 158.39 -2.90ZM157.05 -4.25A8.79 8.79 0 0 1 149.79 -11.50A8.79 8.79 0 0 1 157.05 -4.25ZM148.45 27.36A10.01 10.01 0 0 1 158.39 17.42A10.01 10.01 0 0 1 148.45 27.36ZM149.79 26.02A8.79 8.79 0 0 1 157.05 18.76A8.79 8.79 0 0 1 149.79 26.02ZM158.39 17.27A10.01 10.01 0 0 1 148.45 7.33A10.01 10.01 0 0 1 158.39 17.27ZM157.05 15.93A8.79 8.79 0 0 1 149.79 8.67A8.79 8.79 0 0 1 157.05 15.93ZM148.45 47.54A10.01 10.01 0 0 1 158.39 37.59A10.01 10.01 0 0 1 148.45 47.54ZM149.79 46.19A8.79 8.79 0 0 1 157.05 38.94A8.79 8.79 0 0 1 149.79 46.19ZM158.39 37.45A10.01 10.01 0 0 1 148.45 27.51A10.01 10.01 0 0 1 158.39 37.45ZM157.05 36.10A8.79 8.79 0 0 1 149.79 28.85A8.79 8.79 0 0 1 157.05 36.10ZM148.45 67.71A10.01 10.01 0 0 1 158.39 57.77A10.01 10.01 0 0 1 148.45 67.71ZM149.79 66.37A8.79 8.79 0 0 1 157.05 59.11A8.79 8.79 0 0 1 149.79 66.37ZM158.39 57.62A10.01 10.01 0 0 1 148.45 47.68A10.01 10.01 0 0 1 158.39 57.62ZM157.05 56.28A8.79 8.79 0 0 1 149.79 49.03A8.79 8.79 0 0 1 157.05 56.28Z"/></g></svg>
<div class="a" style="left:99.5px;top:63px;width:1.2px;height:11px;background:#2b5c73"></div></div>
<svg width="1440" height="747" style="position:absolute;left:0;top:0"><rect x="29" y="14" width="16.2" height="15.8" fill="#fff"/><rect x="31.3" y="15.4" width="11.6" height="7.5" fill="#444"/><rect x="33.4" y="25.2" width="6.6" height="3.4" fill="#444"/><rect x="35.9" y="25.2" width="1.6" height="3.4" fill="#fff"/><path d="M70 19.6H75.2A5.1 5.1 0 0 1 76.8 29.6" fill="none" stroke="#8a8a8a" stroke-width="2.5"/><path d="M65 19.6L71.8 14.6V24.6Z" fill="#8a8a8a"/><path d="M90.90 20.00H97.50L94.20 23.00Z" fill="#d0d0d0"/><path d="M116.6 14.9A6.6 6.6 0 1 0 123.2 17.6" fill="none" stroke="#8a8a8a" stroke-width="2.6"/><path d="M119.3 14.1L126.4 14.9L121 21.2Z" fill="#8a8a8a"/><g fill="none" stroke="#fff" stroke-width="1.5"><path d="M145 13.8H164.4"/><path d="M147.5 14V25.8H156"/><path d="M150 18.2H154.5M150 20.6H154.5"/><circle cx="160.2" cy="22.2" r="4.6"/><path d="M153.5 25.8L151 30.2H159.5L157.5 27.5"/></g><path d="M158.8 19.8L162.8 22.2L158.8 24.6Z" fill="#fff"/><g fill="none" stroke="#fff" stroke-width="1.5"><path d="M182.5 20.5A4.3 4.3 0 1 1 189 20.5"/></g><path d="M184.4 17.5a1.4 1.4 0 0 1 2.8 0V23.5L191 24.5C192.5 25 193.3 26 193 27.5L192.5 30.3H184.5L179.6 25.3C179.2 24.6 180 23.8 181 24.3L184.4 26Z" fill="#fff"/><path d="M203.75 20.20H210.25L207.00 23.00Z" fill="#fff"/><rect x="229" y="17.2" width="5.5" height="1.2" fill="#fff"/><path d="M228.45 20.20H234.95L231.70 23.70Z" fill="#fff"/><g fill="none" stroke="#fff" stroke-width="1.1"><rect x="1231.5" y="14.2" width="14.5" height="11"/><path d="M1231.5 16.5H1246"/><path d="M1238.7 25.2V18.5M1236 21.2L1238.7 18.5L1241.4 21.2"/><path d="M1290 19.6H1302"/><rect x="1347.3" y="14.3" width="11.2" height="11.2"/><path d="M1404.3 14.2L1416 25.8M1416 14.2L1404.3 25.8"/></g><g fill="none" stroke="#fff" stroke-width="1.2"><circle cx="1316.8" cy="58.6" r="4.6"/><path d="M1309.2 70.8A8 8 0 0 1 1321 63.6"/><path d="M1318.5 67.4H1326.7M1322.6 63.3V71.5"/><path d="M1401.4 54.6H1418.4V65.4H1408.2L1404.2 69.8V65.4H1401.4Z"/></g><path d="M838.4 65.6C838.4 63 835.2 61.5 835.2 58.6A5.8 5.8 0 0 1 846.8 58.6C846.8 61.5 843.6 63 843.6 65.6Z" fill="none" stroke="#e6e6e6" stroke-width="1.2"/><rect x="837.8" y="66" width="6.4" height="2.8" fill="#e6e6e6"/><rect x="839" y="69.7" width="4.2" height="1.3" fill="#e6e6e6"/></svg>
<svg width="1440" height="747" style="position:absolute;left:0;top:0"><rect x="99" y="88" width="1" height="101" fill="#9c9c9c"/><rect x="277" y="88" width="1" height="101" fill="#9c9c9c"/><rect x="580" y="88" width="1" height="101" fill="#9c9c9c"/><rect x="801" y="88" width="1" height="101" fill="#9c9c9c"/><rect x="1255" y="88" width="1" height="101" fill="#9c9c9c"/><rect x="1369" y="88" width="1" height="101" fill="#9c9c9c"/><rect x="1437" y="82" width="1" height="112" fill="#bdbdbd"/><rect x="1438.5" y="82" width="1.5" height="112" fill="#444"/><g fill="none" stroke="#555" stroke-width="1"><path d="M85.5 188V179.5H93"/><path d="M88 182L93.5 187.5"/></g><path d="M94 188H90L94 184Z" fill="#555"/><g fill="none" stroke="#555" stroke-width="1"><path d="M566.5 188V179.5H574"/><path d="M569 182L574.5 187.5"/></g><path d="M575 188H571L575 184Z" fill="#555"/><g fill="none" stroke="#555" stroke-width="1"><path d="M788.0 188V179.5H795.5"/><path d="M790.5 182L796.0 187.5"/></g><path d="M796.5 188H792.5L796.5 184Z" fill="#555"/><g fill="none" stroke="#555" stroke-width="1"><path d="M1241.0 188V179.5H1248.5"/><path d="M1243.5 182L1249.0 187.5"/></g><path d="M1249.5 188H1245.5L1249.5 184Z" fill="#555"/><rect x="16" y="91.4" width="28" height="34" fill="#e7b957"/><rect x="21" y="93.4" width="16.8" height="4.4" fill="#3b3b3b"/><rect x="26" y="90" width="6.8" height="4" fill="#3b3b3b"/><rect x="28.8" y="92.6" width="1.4" height="1.4" fill="#ccc"/><path d="M35.6 108.5H45.3L49.3 112.5V127H35.6Z" fill="#fff" stroke="#2b2b2b" stroke-width="1"/><path d="M45.3 108.5V112.5H49.3" fill="none" stroke="#2b2b2b" stroke-width="0.8"/><path d="M26.60 157.70H33.60L30.10 161.10Z" fill="#404040"/><g fill="none" stroke="#767676" stroke-width="1.3"><circle cx="62.5" cy="104.6" r="2.6"/><circle cx="71.6" cy="104.6" r="2.6"/><path d="M63.8 102.3L72.5 90.3M70.3 102.3L61.6 90.3"/></g><g stroke="#2e2e2e" stroke-width="0.9" fill="#fff"><path d="M59.6 118.4H65.8L68 120.6V130.5H59.6Z"/><path d="M66.4 124.6H72.8L75 126.8V134.4H66.4Z"/></g><g stroke="#444" stroke-width="0.9"><path d="M61 122H64M61 124.5H65M61 127H64.5M68 128.5H73M68 131H73.5M68 133H72.5"/></g><path d="M84.00 125.40H90.00L87.00 128.40Z" fill="#555"/><g transform="rotate(-45 66 152)"><rect x="62" y="149" width="9" height="4" fill="#777" opacity="0.7"/><rect x="58" y="153" width="13" height="5" fill="#d0d0d0" opacity="0.8"/><rect x="73" y="150" width="3" height="3" fill="#777" opacity="0.7"/></g><rect x="117.9" y="94.6" width="33.3" height="26.5" rx="1.8" fill="#fff" stroke="#3a3a3a" stroke-width="1.1"/><rect x="122" y="99.3" width="25" height="6.2" fill="#cfcfcf"/><path d="M126 111.4H147M126 114.4H147M122.5 111.4H124M122.5 114.4H124" stroke="#444" stroke-width="0.9"/><g stroke="#e9c377" stroke-width="1.6"><path d="M120.8 88.5V100.9M114.6 94.7H127M116.4 90.3L125.2 99.1M125.2 90.3L116.4 99.1"/></g><path d="M156.40 157.80H162.40L159.40 160.80Z" fill="#404040"/><rect x="168.6" y="91.8" width="19" height="14.6" fill="#fff" stroke="#3a3a3a" stroke-width="1.1"/><rect x="171" y="94" width="14.5" height="2.6" fill="#cfcfcf"/><rect x="171" y="97.8" width="5.8" height="7" fill="#cfcfcf"/><path d="M178.5 99H185M178.5 101.2H185M178.5 103.4H183.5" stroke="#444" stroke-width="0.8"/><rect x="170.2" y="121" width="17.4" height="13" fill="#fff" stroke="#3a3a3a" stroke-width="1.1"/><rect x="172" y="127" width="5.2" height="5.4" fill="#cfcfcf"/><path d="M178.8 126.3H185M178.8 128.6H185M178.8 130.9H183.5" stroke="#444" stroke-width="0.8"/><path d="M181 124.5A5 5 0 0 0 171.5 122.2" fill="none" stroke="#2468b0" stroke-width="2"/><path d="M168.2 122.8L173.4 119.2L174.2 125.5Z" fill="#2468b0"/><g stroke="#e9c377" stroke-width="1.2"><path d="M173.1 145V152.4M169.4 148.7H176.8M170.5 146.1L175.7 151.3M175.7 146.1L170.5 151.3"/></g><rect x="177" y="148.7" width="9.2" height="3.4" fill="#f3dc9a"/><rect x="175.9" y="153.8" width="10.6" height="9.4" fill="#fff" stroke="#3a3a3a" stroke-width="1"/><rect x="177.5" y="155.6" width="7.5" height="2.6" fill="#cfcfcf"/><path d="M260.40 97.20H266.40L263.40 100.20Z" fill="#404040"/><path d="M231.60 155.20H237.60L234.60 158.20Z" fill="#404040"/><rect x="282.5" y="95.8" width="150.3" height="26.5" fill="#b3b3b3" stroke="#8a8a8a" stroke-width="1"/><rect x="284" y="97.3" width="134" height="23.5" fill="none" stroke="#dcdcdc" stroke-width="1.6"/><rect x="432.8" y="95.8" width="54.3" height="26.5" fill="#b3b3b3" stroke="#8a8a8a" stroke-width="1"/><rect x="434.4" y="97.3" width="38.5" height="23.5" fill="none" stroke="#dcdcdc" stroke-width="1.6"/><path d="M422.45 107.20H427.95L425.20 109.80Z" fill="#777"/><path d="M477.65 107.20H483.15L480.40 109.80Z" fill="#777"/><g font-family="Liberation Sans" fill="#6f6f6f"><text x="288.6" y="151.6" font-size="15" font-weight="bold">B</text><text x="317" y="151.6" font-size="15" font-weight="bold" font-style="italic">I</text><text x="340.5" y="150" font-size="15" font-weight="bold">U</text><text x="368.6" y="152.6" font-size="16" font-weight="bold" fill="#8c8c8c" opacity="0.8">S</text><text x="367.3" y="151.6" font-size="16" font-weight="bold" fill="#606060">S</text><text x="389" y="151.2" font-size="12.5">abc</text><text x="416" y="147.5" font-size="13">AV</text><text x="496" y="113.8" font-size="14.5">A</text><text x="521.3" y="113.8" font-size="14.5">A</text><text x="555.3" y="109.6" font-size="14">A</text><text x="454.6" y="151.6" font-size="15.5">Aa</text><text x="500.8" y="143.7" font-size="11">ab</text><text x="543.8" y="149.9" font-size="17" font-weight="bold">A</text></g><rect x="341" y="152" width="11" height="1" fill="#6f6f6f"/><rect x="388.5" y="146" width="21" height="1" fill="#6f6f6f"/><path d="M417 152.5H433M419 150.5L417 152.5L419 154.5M431 150.5L433 152.5L431 154.5" fill="none" stroke="#8a8a8a" stroke-width="0.9"/><path d="M504.6 101.4L508 99L511.3 101.4Z" fill="#6f6f6f"/><path d="M529.40 99.90H535.40L532.40 102.50Z" fill="#6f6f6f"/><rect x="544.3" y="97.3" width="1" height="21.7" fill="#9a9a9a"/><rect x="492" y="136" width="1" height="20.6" fill="#9a9a9a"/><path d="M519.5 139.5L509 150" stroke="#7a7a7a" stroke-width="2.8"/><rect x="501" y="150.9" width="20" height="5.1" fill="#e6e6e6"/><ellipse cx="566" cy="107" rx="4.5" ry="5.5" fill="#a8a8a8" opacity="0.8"/><path d="M439.00 144.20H445.00L442.00 147.00Z" fill="#6f6f6f"/><path d="M477.50 144.20H483.50L480.50 147.00Z" fill="#6f6f6f"/><path d="M527.40 144.20H533.40L530.40 147.00Z" fill="#6f6f6f"/><path d="M566.50 144.20H572.50L569.50 147.00Z" fill="#6f6f6f"/><g stroke="#707070" stroke-width="1.1" fill="none"><path d="M594.5 99.4H607M594.5 106.6H607M594.5 113.8H607"/><path d="M633 99.4H646M633 106.6H646M633 113.8H646"/><path d="M670 99H688M678 102.5H688M678 106H688M678 109.5H688M670 113.5H688"/><path d="M675 103L671 106.2L675 109.5M671 106.2H676"/><path d="M696 99H714M704 102.5H714M704 106H714M704 109.5H714M696 113.5H714"/><path d="M697.5 103L701.5 106.2L697.5 109.5M701.5 106.2H696"/><path d="M733 101H742M733 104.5H742M733 108H742M733 111.5H742"/><path d="M727.5 100V113"/><path d="M763 89.5V107.5M767 89.5V107.5M772 100V107.5M778 100V107.5"/><path d="M590 139H605M590 142.2H602M590 145.5H605M590 148.8H602"/><path d="M615.7 139H631.7M618 142.2H629.5M615.7 145.5H631.7M618 148.8H629.5"/><path d="M642 139H657M645 142.2H657M642 145.5H657M645 148.8H657"/><path d="M667.6 139H684.4M667.6 142.2H684.4M667.6 145.5H684.4M667.6 148.8H684.4"/><path d="M703 139H710M703 142.2H710M703 145.5H710M703 148.8H710M713 139H720.4M713 142.2H720.4M713 145.5H720.4M713 148.8H720.4"/></g><g fill="#707070"><circle cx="590.2" cy="99.4" r="1.1"/><circle cx="590.2" cy="106.6" r="1.1"/><circle cx="590.2" cy="113.8" r="1.1"/><path d="M724.8 103L727.5 99.5L730.2 103Z"/><path d="M724.8 110.2L727.5 113.7L730.2 110.2Z"/><path d="M761 105.5L763 108.4L765 105.5ZM765 105.5L767 108.4L769 105.5ZM770 105.5L772 108.4L774 105.5ZM776 105.5L778 108.4L780 105.5Z"/></g><g font-family="Liberation Sans" fill="#707070" font-size="5.5"><text x="627.5" y="101.5">1</text><text x="627.5" y="108.5">2</text><text x="627.5" y="115.8">3</text></g><text x="770" y="99" font-family="Liberation Sans" font-size="13" fill="#707070">A</text><rect x="762.5" y="119.5" width="19" height="14.5" fill="#fff" stroke="#6a6a6a" stroke-width="1"/><path d="M772 121V132.5" stroke="#6a6a6a" stroke-width="1"/><path d="M769.5 123.5L772 120.5L774.5 123.5ZM769.5 130L772 133L774.5 130Z" fill="#6a6a6a"/><path d="M761 147.5H773L777 152.5L773 157H761L765 152.5Z" fill="#8e8e8e"/><rect x="769" y="152" width="12.8" height="10.6" fill="#fff" stroke="#5a5a5a" stroke-width="1"/><path d="M771.5 155.5H779.5M771.5 158.5H779.5" stroke="#888" stroke-width="0.8"/><rect x="693" y="136" width="1" height="20" fill="#9a9a9a"/><path d="M613.80 105.60H619.80L616.80 108.40Z" fill="#6f6f6f"/><path d="M653.00 105.60H659.00L656.00 108.40Z" fill="#6f6f6f"/><path d="M747.70 105.60H753.70L750.70 108.40Z" fill="#6f6f6f"/><path d="M786.00 97.00H792.00L789.00 99.80Z" fill="#6f6f6f"/><path d="M786.00 125.60H792.00L789.00 128.40Z" fill="#6f6f6f"/><path d="M786.00 153.40H792.00L789.00 156.20Z" fill="#6f6f6f"/><path d="M725.70 143.30H731.70L728.70 146.10Z" fill="#6f6f6f"/><rect x="807.5" y="88.5" width="176.3" height="76.7" fill="#b3b3b3" stroke="#7e7e7e" stroke-width="1"/><rect x="808" y="89" width="157" height="75.7" fill="#d2d2d2"/><rect x="966" y="89" width="17.3" height="75.7" fill="#c9c9c9"/><path d="M965.5 89V164.7M965.5 114.5H983.5M965.5 138.3H983.5" stroke="#8e8e8e" stroke-width="1"/><path d="M971.5 102.5L974.5 99.5L977.5 102.5Z" fill="#a0a0a0"/><path d="M971.50 125.50H977.50L974.50 128.50Z" fill="#404040"/><rect x="971.5" y="148.5" width="6" height="1" fill="#404040"/><path d="M971.50 151.00H977.50L974.50 154.00Z" fill="#404040"/><g stroke="#333" stroke-width="1" fill="#fff"><rect x="811.5" y="93.5" width="18" height="14" fill="#fff"/><path d="M818 97.5H828M818 100H828M813.5 103H828M813.5 105.5H828" stroke="#2a6a9a" stroke-width="0.8"/><path d="M838.4 92.3L856.5 110" fill="none"/><path d="M864.3 92.3L881.5 109.5" fill="none"/><path d="M881.8 110L881.5 104.5M881.8 110L876.5 109.8" fill="none"/><rect x="890" y="94" width="17.5" height="13"/><ellipse cx="924.8" cy="100.8" rx="8.6" ry="6.5"/><rect x="942" y="94" width="17.5" height="13" rx="2.5"/><path d="M812.5 135H828.5L820.5 120.5Z"/><path d="M838.3 120.2H844.5V133.9H856" fill="none"/><path d="M864.4 120.2H872.1V132.5H882" fill="none"/><path d="M879 129.5L882 132.5L879 135.5" fill="none"/><path d="M890.5 123H897.7V118.7L907 126.6L897.7 134.5V130.2H890.5Z"/><path d="M921 118.5H928.5V126.2H933L924.8 134.5L916.5 126.2H921Z"/><path d="M946 118.5H955.5A3 3 0 0 0 959.5 125.5V134H942V122.5Z"/><path d="M823.5 144.5C819 143.5 816 146.5 820 149.5C823.5 152 820.5 154.5 818 152M821 148C825 149.5 824.5 153.5 826 160" fill="none"/><path d="M838.5 145.8C848 145.8 856 152 856 160" fill="none"/><path d="M864.5 155C867 144 871 142 874.5 148.5C877.5 155.5 879 159 883 159" fill="none"/></g><g font-family="Liberation Sans" fill="#222" font-size="15"><text x="894" y="158">{</text><text x="920" y="158">}</text></g><path d="M950.5 144.5L952.8 149.6L958.3 150L954.1 153.6L955.4 159L950.5 156.1L945.6 159L946.9 153.6L942.7 150L948.2 149.6Z" fill="#fff" stroke="#333" stroke-width="1"/><text x="813.3" y="102.6" font-family="Liberation Sans" font-weight="bold" font-size="8" fill="#2a6a9a">A</text><rect x="1012" y="97.6" width="22.4" height="21.4" fill="#e9bd63"/><rect x="1006.3" y="90.5" width="15.5" height="15.2" fill="#fff" stroke="#333" stroke-width="1"/><rect x="1025.5" y="109.5" width="15.5" height="15.2" fill="#fff" stroke="#333" stroke-width="1"/><path d="M1021.30 158.40H1027.30L1024.30 161.40Z" fill="#404040"/><rect x="1070" y="91.8" width="31.4" height="31.4" rx="4.5" fill="#f2f2f2" stroke="#a0a0a0" stroke-width="0.9"/><path d="M1106.5 100.5L1106.5 106L1087 125.5L1079 127L1081 120Z" fill="#7a7a7a"/><path d="M1097 110.5L1100.5 114" stroke="#b9b9b9" stroke-width="1.2"/><circle cx="1090.8" cy="120" r="3.4" fill="#f4f4f4" stroke="#7a7a7a" stroke-width="0.8"/><path d="M1098.50 158.40H1104.50L1101.50 161.40Z" fill="#7a7a7a"/><path d="M1117 96.5L1124 89.5L1131 96.5L1124 103.5Z" fill="#f2f2f2" stroke="#777" stroke-width="1.2"/><path d="M1121 91.5V89a2 2 0 0 1 4 0" fill="none" stroke="#777" stroke-width="1"/><circle cx="1132.5" cy="100" r="1.8" fill="#777"/><path d="M1121.5 115.5H1114.5V128.5H1121" fill="none" stroke="#777" stroke-width="1.1"/><path d="M1119 126L1121 121L1131 112L1133 114L1123 123Z" fill="#f2f2f2" stroke="#777" stroke-width="1.1"/><path d="M1116 152.5L1123 145L1131.5 145.5L1133 150L1126 157L1117.5 157.5Z" fill="#8a8a8a"/><path d="M1116 151.5L1123 144.5L1131.5 145L1125 152Z" fill="#f4f4f4"/><path d="M1125 152L1127 158" stroke="#f4f4f4" stroke-width="1"/><path d="M1235.60 96.80H1241.60L1238.60 99.80Z" fill="#7a7a7a"/><path d="M1235.60 123.80H1241.60L1238.60 126.80Z" fill="#7a7a7a"/><path d="M1235.60 150.00H1241.60L1238.60 153.00Z" fill="#7a7a7a"/><circle cx="1276.7" cy="94.6" r="5.3" fill="#fff" stroke="#1e4f8a" stroke-width="2.2"/><path d="M1272.5 99L1265.5 105.8" stroke="#1e4f8a" stroke-width="2.6"/><g font-family="Liberation Sans" font-size="10.5"><text x="1263.6" y="126" fill="#333">a</text><text x="1269.5" y="126" fill="#6a4aa0">b</text><text x="1269.3" y="134.2" fill="#333">a</text><text x="1275.2" y="134.2" fill="#2a6a9a">c</text></g><path d="M1264.2 127.5V130.8H1268.5M1266.7 129L1268.7 130.8L1266.7 132.6" fill="none" stroke="#2a6a9a" stroke-width="1"/><path d="M1353.70 122.90H1359.70L1356.70 125.90Z" fill="#404040"/><path d="M1268.3 142.8V157.5L1271.6 154.2L1274.3 160.2L1276.6 159.2L1274 153.4H1278.4Z" fill="#fff" stroke="#333" stroke-width="1"/><path d="M1333.20 150.40H1339.20L1336.20 153.40Z" fill="#404040"/><path d="M1417.8 185.5L1422.5 180.8L1427.2 185.5" fill="none" stroke="#1e1e1e" stroke-width="2"/></svg>
<svg width="1440" height="747" style="position:absolute;left:0;top:0"><rect x="1014.4" y="719" width="41.2" height="28" fill="#484848"/><g fill="none" stroke="#f0f0f0" stroke-width="1.1"><path d="M916 731.2H929M916 734.5H929M916 737.5H923"/><rect x="1026.6" y="724.6" width="16.2" height="15"/><rect x="1032.4" y="725.6" width="9.5" height="7.8"/><path d="M1110.8 724.6H1126.8V737.6H1110.8Z"/><path d="M1118.8 724.6V739.5"/><path d="M1113 727.6H1117M1113 730H1117M1113 732.4H1117M1113 734.8H1117M1120.5 727.6H1124.5M1120.5 730H1124.5M1120.5 732.4H1124.5M1120.5 734.8H1124.5"/><path d="M1152 724.7H1168.4"/><path d="M1153.8 724.7V733.5H1166.6V724.7"/><path d="M1156.5 728.2H1163M1160.2 733.5V738.5M1157.5 738.6H1163"/><rect x="1402" y="724.5" width="15.5" height="15"/></g><path d="M918.6 728.8L922.5 725L926.4 728.8Z" fill="#f0f0f0"/><rect x="1026" y="724" width="5.4" height="16.2" fill="#f0f0f0"/><rect x="1033.5" y="734.5" width="9.5" height="5" fill="#f0f0f0"/><rect x="1035" y="736" width="6.5" height="2.2" fill="#666"/><rect x="1033.4" y="726.8" width="7.6" height="5.8" fill="#7a7a7a"/><g fill="#f0f0f0"><rect x="1068" y="724" width="7" height="6.3"/><rect x="1077.2" y="724" width="7" height="6.3"/><rect x="1068" y="732.7" width="7" height="6.3"/><rect x="1077.2" y="732.7" width="7" height="6.3"/></g><rect x="1186.9" y="731" width="9.6" height="2.4" fill="#f0f0f0"/><rect x="1201" y="731.6" width="124.6" height="1" fill="#f0f0f0"/><rect x="1231.9" y="725.5" width="4.8" height="13.1" fill="#f0f0f0"/><rect x="1262.8" y="728" width="1" height="8" fill="#f0f0f0"/><path d="M1330.5 732.1H1341.7M1336.1 726.5V737.7" stroke="#f0f0f0" stroke-width="1.8"/><g fill="#f0f0f0"><path d="M1407.3 726L1411.3 726L1409.3 728.8Z"/><path d="M1407.3 738.2L1411.3 738.2L1409.3 735.4Z"/><path d="M1403.2 730.1L1403.2 734.1L1406 732.1Z"/><path d="M1415.6 730.1L1415.6 734.1L1412.8 732.1Z"/></g><path d="M1409.3 725V739.5M1402 732.1H1417" stroke="#f0f0f0" stroke-width="0.6"/></svg>
<div class="t" style="left:631.52px;top:12.08px;font-size:15.6px;color:#f2f2f2;font-family:'Liberation Sans',sans-serif;font-weight:normal;font-style:normal;transform:scaleX(0.9258);transform-origin:0 0;">Prezentace1&nbsp;&nbsp;-&nbsp;&nbsp;PowerPoint</div>
<div class="t" style="left:1122.82px;top:11.68px;font-size:15.6px;color:#f2f2f2;font-family:'Liberation Sans',sans-serif;font-weight:normal;font-style:normal;transform:scaleX(0.9333);transform-origin:0 0;">David Jezek</div>
<div class="t" style="left:13.22px;top:53.68px;font-size:15.6px;color:#f2f2f2;font-family:'Liberation Sans',sans-serif;font-weight:normal;font-style:normal;transform:scaleX(0.9881);transform-origin:0 0;">Soubor</div>
<div class="t" style="left:158.52px;top:53.68px;font-size:15.6px;color:#f2f2f2;font-family:'Liberation Sans',sans-serif;font-weight:normal;font-style:normal;transform:scaleX(0.9879);transform-origin:0 0;">Vložení</div>
<div class="t" style="left:236.92px;top:53.68px;font-size:15.6px;color:#f2f2f2;font-family:'Liberation Sans',sans-serif;font-weight:normal;font-style:normal;transform:scaleX(0.9384);transform-origin:0 0;">Kreslení</div>
<div class="t" style="left:318.22px;top:53.68px;font-size:15.6px;color:#f2f2f2;font-family:'Liberation Sans',sans-serif;font-weight:normal;font-style:normal;transform:scaleX(0.9637);transform-origin:0 0;">Návrh</div>
<div class="t" style="left:385.92px;top:53.68px;font-size:15.6px;color:#f2f2f2;font-family:'Liberation Sans',sans-serif;font-weight:normal;font-style:normal;transform:scaleX(0.9469);transform-origin:0 0;">Přechody</div>
<div class="t" style="left:476.12px;top:53.68px;font-size:15.6px;color:#f2f2f2;font-family:'Liberation Sans',sans-serif;font-weight:normal;font-style:normal;transform:scaleX(0.9755);transform-origin:0 0;">Animace</div>
<div class="t" style="left:562.82px;top:53.68px;font-size:15.6px;color:#f2f2f2;font-family:'Liberation Sans',sans-serif;font-weight:normal;font-style:normal;transform:scaleX(0.9302);transform-origin:0 0;">Prezentace</div>
<div class="t" style="left:664.52px;top:53.68px;font-size:15.6px;color:#f2f2f2;font-family:'Liberation Sans',sans-serif;font-weight:normal;font-style:normal;transform:scaleX(0.9165);transform-origin:0 0;">Revize</div>
<div class="t" style="left:736.12px;top:53.68px;font-size:15.6px;color:#f2f2f2;font-family:'Liberation Sans',sans-serif;font-weight:normal;font-style:normal;transform:scaleX(0.9696);transform-origin:0 0;">Zobrazení</div>
<div class="t" style="left:89.22px;top:53.68px;font-size:15.6px;color:#262626;font-family:'Liberation Sans',sans-serif;font-weight:normal;font-style:normal;transform:scaleX(1.0118);transform-origin:0 0;">Domů</div>
<div class="t" style="left:853.42px;top:53.68px;font-size:15.6px;color:#a9a9a9;font-family:'Liberation Sans',sans-serif;font-weight:normal;font-style:normal;transform:scaleX(0.9435);transform-origin:0 0;">Řekněte mi, co chcete udělat.</div>
<div class="t" style="left:1335.64px;top:54.54px;font-size:15.2px;color:#f2f2f2;font-family:'Liberation Sans',sans-serif;font-weight:normal;font-style:normal;">Sdílet</div>
<div class="t" style="left:10.45px;top:132.12px;font-size:15px;color:#262626;font-family:'Liberation Sans',sans-serif;font-weight:normal;font-style:normal;transform:scaleX(1.0510);transform-origin:0 0;">Vložit</div>
<div class="t" style="left:116.75px;top:132.12px;font-size:15px;color:#262626;font-family:'Liberation Sans',sans-serif;font-weight:normal;font-style:normal;transform:scaleX(1.0226);transform-origin:0 0;">Nový</div>
<div class="t" style="left:105.55px;top:151.53px;font-size:15px;color:#262626;font-family:'Liberation Sans',sans-serif;font-weight:normal;font-style:normal;transform:scaleX(0.9793);transform-origin:0 0;">snímek</div>
<div class="t" style="left:190.73px;top:90.46px;font-size:15.4px;color:#262626;font-family:'Liberation Sans',sans-serif;font-weight:normal;font-style:normal;transform:scaleX(0.9592);transform-origin:0 0;">Rozložení</div>
<div class="t" style="left:190.73px;top:118.46px;font-size:15.4px;color:#262626;font-family:'Liberation Sans',sans-serif;font-weight:normal;font-style:normal;">Obnovit</div>
<div class="t" style="left:190.73px;top:146.46px;font-size:15.4px;color:#262626;font-family:'Liberation Sans',sans-serif;font-weight:normal;font-style:normal;">Oddíl</div>
<div class="t" style="left:988.55px;top:132.62px;font-size:15px;color:#262626;font-family:'Liberation Sans',sans-serif;font-weight:normal;font-style:normal;">Uspořádat</div>
<div class="t" style="left:1063.85px;top:132.62px;font-size:15px;color:#7c7c7c;font-family:'Liberation Sans',sans-serif;font-weight:normal;font-style:normal;transform:scaleX(0.9498);transform-origin:0 0;">Rychlé</div>
<div class="t" style="left:1065.75px;top:151.53px;font-size:15px;color:#7c7c7c;font-family:'Liberation Sans',sans-serif;font-weight:normal;font-style:normal;transform:scaleX(0.9850);transform-origin:0 0;">styly</div>
<div class="t" style="left:1136.75px;top:89.83px;font-size:15px;color:#7c7c7c;font-family:'Liberation Sans',sans-serif;font-weight:normal;font-style:normal;">Výplň obrazce</div>
<div class="t" style="left:1136.75px;top:117.02px;font-size:15px;color:#7c7c7c;font-family:'Liberation Sans',sans-serif;font-weight:normal;font-style:normal;transform:scaleX(0.9806);transform-origin:0 0;">Obrys obrazce</div>
<div class="t" style="left:1136.75px;top:143.33px;font-size:15px;color:#7c7c7c;font-family:'Liberation Sans',sans-serif;font-weight:normal;font-style:normal;transform:scaleX(0.9832);transform-origin:0 0;">Efekty obrazce</div>
<div class="t" style="left:1285.55px;top:90.42px;font-size:15px;color:#262626;font-family:'Liberation Sans',sans-serif;font-weight:normal;font-style:normal;transform:scaleX(1.0715);transform-origin:0 0;">Najít</div>
<div class="t" style="left:1285.55px;top:117.62px;font-size:15px;color:#262626;font-family:'Liberation Sans',sans-serif;font-weight:normal;font-style:normal;transform:scaleX(1.0380);transform-origin:0 0;">Nahradit</div>
<div class="t" style="left:1285.55px;top:144.03px;font-size:15px;color:#262626;font-family:'Liberation Sans',sans-serif;font-weight:normal;font-style:normal;transform:scaleX(1.0223);transform-origin:0 0;">Vybrat</div>
<div class="t" style="left:13.78px;top:176.69px;font-size:12.5px;color:#262626;font-family:'Liberation Sans',sans-serif;font-weight:normal;font-style:normal;transform:scaleX(0.9795);transform-origin:0 0;">Schránka</div>
<div class="t" style="left:167.38px;top:176.69px;font-size:12.5px;color:#262626;font-family:'Liberation Sans',sans-serif;font-weight:normal;font-style:normal;transform:scaleX(0.9796);transform-origin:0 0;">Snímky</div>
<div class="t" style="left:400.68px;top:176.69px;font-size:12.5px;color:#262626;font-family:'Liberation Sans',sans-serif;font-weight:normal;font-style:normal;">Písmo</div>
<div class="t" style="left:654.27px;top:176.69px;font-size:12.5px;color:#262626;font-family:'Liberation Sans',sans-serif;font-weight:normal;font-style:normal;transform:scaleX(1.0345);transform-origin:0 0;">Odstavec</div>
<div class="t" style="left:994.88px;top:176.69px;font-size:12.5px;color:#262626;font-family:'Liberation Sans',sans-serif;font-weight:normal;font-style:normal;transform:scaleX(1.0211);transform-origin:0 0;">Kreslení</div>
<div class="t" style="left:1291.78px;top:176.69px;font-size:12.5px;color:#262626;font-family:'Liberation Sans',sans-serif;font-weight:normal;font-style:normal;transform:scaleX(1.0589);transform-origin:0 0;">Úpravy</div>
<div class="t" style="left:7.33px;top:725.28px;font-size:13.5px;color:#f0f0f0;font-family:'Liberation Sans',sans-serif;font-weight:normal;font-style:normal;transform:scaleX(0.9293);transform-origin:0 0;">Snímek 1 z 1</div>
<div class="t" style="left:100.83px;top:725.28px;font-size:13.5px;color:#f0f0f0;font-family:'Liberation Sans',sans-serif;font-weight:normal;font-style:normal;transform:scaleX(0.9223);transform-origin:0 0;">Čeština</div>
<div class="t" style="left:934.93px;top:725.28px;font-size:13.5px;color:#f0f0f0;font-family:'Liberation Sans',sans-serif;font-weight:normal;font-style:normal;transform:scaleX(0.9237);transform-origin:0 0;">Poznámky</div>
<div class="t" style="left:1357.33px;top:725.28px;font-size:13.5px;color:#f0f0f0;font-family:'Liberation Sans',sans-serif;font-weight:normal;font-style:normal;transform:scaleX(0.9624);transform-origin:0 0;">56 %</div>
<div class="t" style="left:1011.04px;top:612.85px;font-size:13.2px;color:#1a1a1a;font-family:'Liberation Sans',sans-serif;font-weight:normal;font-style:normal;transform:scaleX(1.1347);transform-origin:0 0;">Kliknutím vložíte podnadpis.</div>
<div class="t" style="left:125.40px;top:396.11px;font-size:18px;color:#535353;font-family:'Liberation Serif',serif;font-weight:normal;font-style:italic;transform:scaleX(1.0988);transform-origin:0 0;">život, vesmír, IT a vůbec...</div>
<div class="t" style="left:539.15px;top:592.74px;font-size:42.5px;font-weight:bold;color:#111;letter-spacing:7.587px;transform:scaleX(0.56);transform-origin:0 0">KLIKNUTÍM</div>
<div class="t" style="left:717.55px;top:592.74px;font-size:42.5px;font-weight:bold;color:#111;letter-spacing:5.529px;transform:scaleX(0.56);transform-origin:0 0">VLOŽÍTE</div>
<div class="t" style="left:850.65px;top:592.74px;font-size:42.5px;font-weight:bold;color:#111;letter-spacing:6.109px;transform:scaleX(0.56);transform-origin:0 0">NADPIS.</div>
<div class="t" style="left:68.88px;top:333.36px;font-size:62px;font-family:'Liberation Serif',serif;font-weight:bold;font-style:italic;color:#474747;-webkit-text-stroke:1.1px #474747;transform:scaleX(1.0960);transform-origin:0 0">tech<span style="color:#3a2a82;-webkit-text-stroke:1.1px #3a2a82">bit</span>.cz</div>
</body></html>
